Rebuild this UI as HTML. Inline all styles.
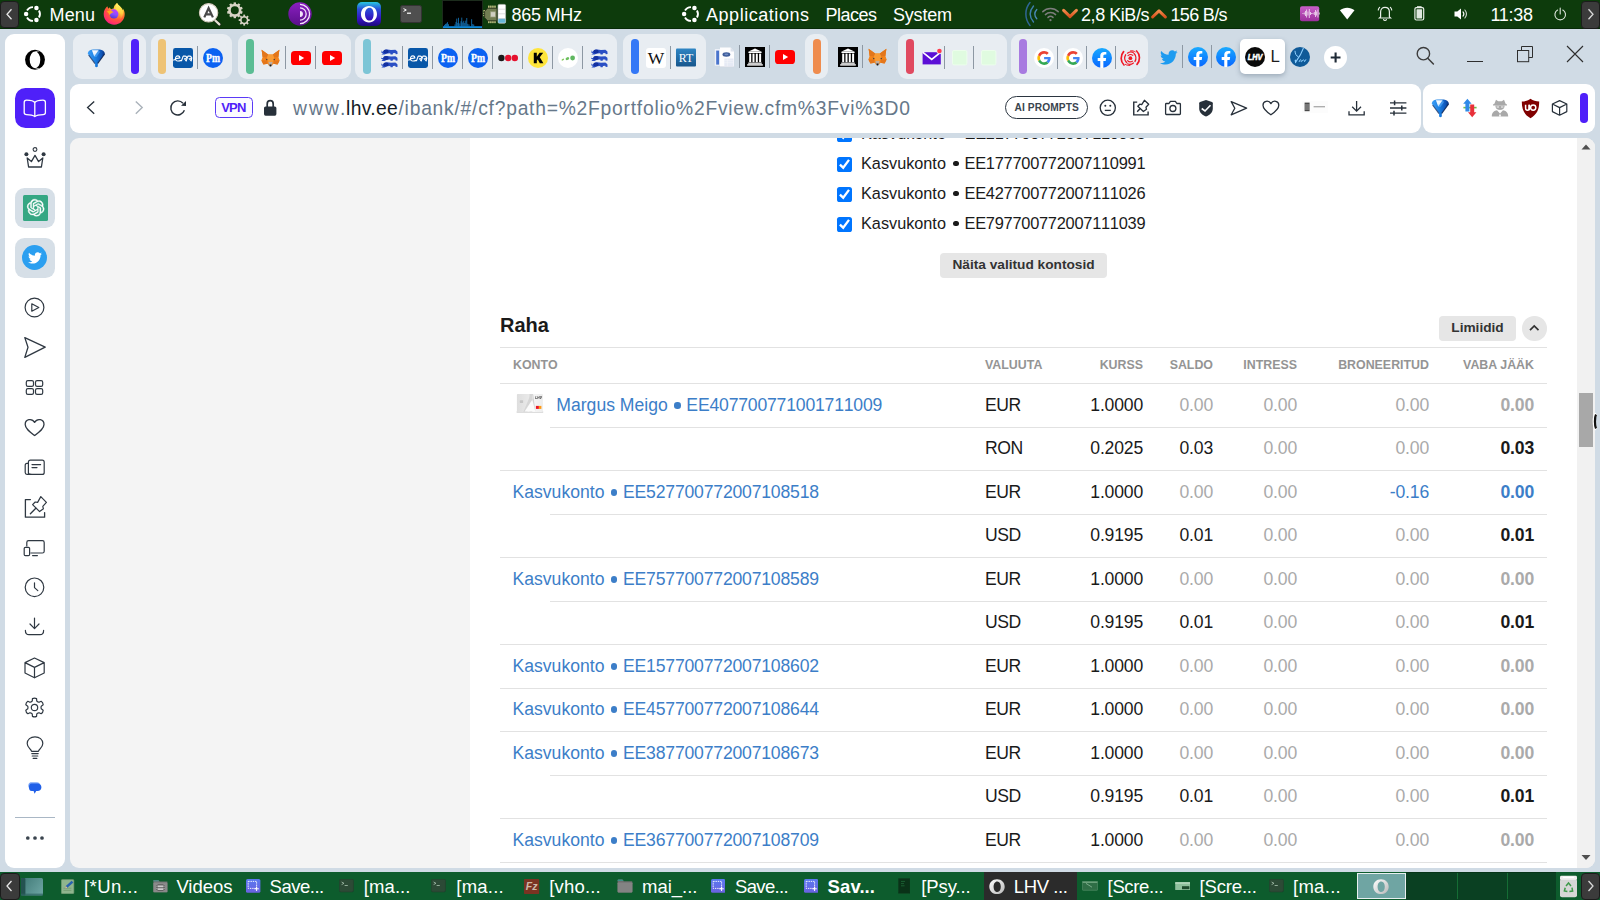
<!DOCTYPE html>
<html>
<head>
<meta charset="utf-8">
<title>LHV</title>
<style>
*{box-sizing:border-box;margin:0;padding:0}
html,body{width:1600px;height:900px;overflow:hidden;background:#d0dbe5;font-family:"Liberation Sans",sans-serif;}
.abs{position:absolute}
#top{position:absolute;left:0;top:0;width:1600px;height:28.6px;background:#0d3b0c;border-bottom:1px solid #062b07;color:#fff;font-size:18px;}
#bot{position:absolute;left:0;top:872px;width:1600px;height:28px;background:#0d5c2d;color:#fff;font-size:18px;}
.pt{position:absolute;top:4.8px;white-space:pre;line-height:21px;font-size:18px;color:#fff}
.bt{position:absolute;top:3px;white-space:pre;line-height:21px;font-size:18px;color:#fff}
#side{position:absolute;left:5px;top:34px;width:60px;height:834px;background:#fff;border-radius:9px}
#addr{position:absolute;left:70px;top:84px;width:1351px;height:49px;background:#fff;border-radius:9px}
#ext{position:absolute;left:1423px;top:84px;width:172px;height:49px;background:#fff;border-radius:9px}
#page{position:absolute;left:70px;top:138px;width:1525px;height:730px;background:#f4f4f4;border-radius:9px;overflow:hidden}
#white{position:absolute;left:400px;top:0;width:1107px;height:730px;background:#fff}
#sbar{position:absolute;left:1507px;top:0;width:18px;height:730px;background:#f1f1f1}
.grp{position:absolute;top:34px;height:45px;background:#e8edf2;border-radius:9px}
.gbar{position:absolute;top:5px;width:7px;height:35px;border-radius:4px}
.tsep{position:absolute;top:10px;width:1px;height:24px;background:#8e99a3}
.fav{position:absolute;top:47px;width:20px;height:20px}
.ln{position:absolute;height:1px;background:#e2e2e2}
.th{position:absolute;font-size:12.4px;font-weight:bold;color:#949494;line-height:14px;white-space:pre}
.td{position:absolute;font-size:17.6px;line-height:20px;white-space:pre;color:#1a1a1a}
.r{text-align:right}
.g{color:#aaa}
.b{font-weight:bold}
.lk{color:#3c7ec8}
.cb{position:absolute;left:837px;width:15px;height:15px;background:#0075ff;border-radius:2.6px}
.cl{position:absolute;left:861px;font-size:16.25px;line-height:20px;color:#1a1a1a;white-space:pre}
.bu{display:inline-block;width:6.4px;height:6.4px;border-radius:50%;background:currentColor;margin:0 5.6px 0 6.6px;vertical-align:2.6px}
.nm{letter-spacing:-0.19px;font-kerning:none}
.cl .nm{letter-spacing:-0.26px;font-size:16.4px}
.cl .bu{width:5.8px;height:5.8px;margin:0 6px 0 6.8px;vertical-align:2.6px}
.si{position:absolute;left:13px;width:24px;height:24px}
</style>
</head>
<body>
<div id="top"><div class="abs" style="left:0;top:1px;width:19px;height:27px;background:#3b3b3b;border-radius:4px;border:1px solid #1c1c1c"></div>
<svg class="abs" style="left:0;top:0" width="20" height="29"><path d="M11.5 9.2 L7 14.2 L11.5 19.2" fill="none" stroke="#e8e8e8" stroke-width="1.3"/></svg>
<svg class="abs" style="left:23.200000000000003px;top:4.1px" width="20" height="20" viewBox="-10 -10 20 20"><path d="M5.98 -3.45 A6.9 6.9 0 0 1 5.98 3.45" fill="none" stroke="#fff" stroke-width="1.9"/><path d="M0.00 6.90 A6.9 6.9 0 0 1 -5.98 3.45" fill="none" stroke="#fff" stroke-width="1.9"/><path d="M-5.98 -3.45 A6.9 6.9 0 0 1 -0.00 -6.90" fill="none" stroke="#fff" stroke-width="1.9"/><circle cx="3.45" cy="-5.98" r="2.25" fill="#fff"/><circle cx="3.45" cy="5.98" r="2.25" fill="#fff"/><circle cx="-6.90" cy="0.00" r="2.25" fill="#fff"/></svg>
<div class="pt" style="left:49.5px;font-size:18px;letter-spacing:0.156px;">Menu</div>
<svg class="abs" style="left:103px;top:2px" width="24" height="24" viewBox="0 0 24 24"><defs><radialGradient id="ffg" cx="0.72" cy="0.18" r="0.95"><stop offset="0" stop-color="#fff36b"/><stop offset="0.3" stop-color="#ffbd35"/><stop offset="0.6" stop-color="#ff5a36"/><stop offset="0.85" stop-color="#ff2f6a"/><stop offset="1" stop-color="#ea0f94"/></radialGradient><linearGradient id="ffp" x1="0.6" y1="0" x2="0.3" y2="1"><stop offset="0" stop-color="#c03cff"/><stop offset="0.5" stop-color="#8a4dff"/><stop offset="1" stop-color="#4a3ad0"/></linearGradient><linearGradient id="ffy" x1="0" y1="0" x2="0" y2="1"><stop offset="0" stop-color="#fff566"/><stop offset="0.6" stop-color="#ffd23f"/><stop offset="1" stop-color="#ff9a36" stop-opacity="0.2"/></linearGradient></defs>
<path d="M4.3 4.3 C2.4 6.4 0.7 8.6 0.7 12 C0.7 18 5.4 22.7 11.2 22.7 C17.2 22.7 21.8 18 21.7 12 C21.7 9.6 20.8 7.8 19.7 6.3 C19.9 7 19.9 7.6 19.6 8.2 C18.6 5 15.2 3.6 14 1 C12 2.6 10.6 4.4 10.7 6.4 C9.6 6.4 8.8 6.8 8.3 7.3 C7.6 6.8 7 6 6.7 5.2 C6.2 5.6 5.9 6.2 5.7 6.8 C5 6.2 4.5 5.2 4.3 4.3Z" fill="url(#ffg)"/>
<path d="M14 1 C15.2 3.6 18.6 5 19.6 8.2 C20.6 11.4 19.8 15.4 16.6 17.6 C18 14.8 17.6 10.6 15.4 8.2 C13.2 6.6 12 3.6 14 1Z" fill="url(#ffy)"/>
<circle cx="11" cy="12.1" r="4.5" fill="url(#ffp)"/>
<path d="M3.6 9.4 C6 8.2 9.4 8.6 10.9 10.3 C9.2 10.6 7.4 11.4 6.6 13.4 C6.4 11.6 5.2 10.2 3.6 9.4Z" fill="#ffa51f"/>
<path d="M8.3 7.3 C10 7 12.6 7.2 13.8 8.6 C12.6 8.2 11.6 8.4 11 8.8Z" fill="#b23cf0" opacity="0.8"/></svg>
<svg class="abs" style="left:196px;top:1px" width="27" height="27" viewBox="0 0 27 27"><path d="M19.4 19.6 L23.4 23.4" stroke="#1a1a1a" stroke-width="3.6" stroke-linecap="round" opacity="0.55"/><path d="M19 19.2 L23.4 23.4" stroke="#e4e0d2" stroke-width="2.2" stroke-linecap="round"/><circle cx="12.6" cy="11.8" r="10" fill="#1a1a1a" opacity="0.5"/><circle cx="12.6" cy="11.8" r="9.2" fill="#fff" stroke="#d4cfbd" stroke-width="1.1"/><path d="M8.3 16.4 L12.6 7.2 L16.9 16.4 M10 13.4 L15.2 13.4" fill="none" stroke="#4a4a4a" stroke-width="2.2"/></svg>
<svg class="abs" style="left:225px;top:0px" width="28" height="29"><g transform="translate(9.8,10.3)"><rect x="-1.2" y="-7.8999999999999995" width="2.4" height="2.6" transform="rotate(0.0)" fill="#d7d3c5"/><rect x="-1.2" y="-7.8999999999999995" width="2.4" height="2.6" transform="rotate(36.0)" fill="#d7d3c5"/><rect x="-1.2" y="-7.8999999999999995" width="2.4" height="2.6" transform="rotate(72.0)" fill="#d7d3c5"/><rect x="-1.2" y="-7.8999999999999995" width="2.4" height="2.6" transform="rotate(108.0)" fill="#d7d3c5"/><rect x="-1.2" y="-7.8999999999999995" width="2.4" height="2.6" transform="rotate(144.0)" fill="#d7d3c5"/><rect x="-1.2" y="-7.8999999999999995" width="2.4" height="2.6" transform="rotate(180.0)" fill="#d7d3c5"/><rect x="-1.2" y="-7.8999999999999995" width="2.4" height="2.6" transform="rotate(216.0)" fill="#d7d3c5"/><rect x="-1.2" y="-7.8999999999999995" width="2.4" height="2.6" transform="rotate(252.0)" fill="#d7d3c5"/><rect x="-1.2" y="-7.8999999999999995" width="2.4" height="2.6" transform="rotate(288.0)" fill="#d7d3c5"/><rect x="-1.2" y="-7.8999999999999995" width="2.4" height="2.6" transform="rotate(324.0)" fill="#d7d3c5"/><circle r="5.3" fill="none" stroke="#d7d3c5" stroke-width="2.5999999999999996"/></g><g transform="translate(19.2,20.1)"><rect x="-0.9" y="-5.5" width="1.8" height="2.6" transform="rotate(0.0)" fill="#d7d3c5"/><rect x="-0.9" y="-5.5" width="1.8" height="2.6" transform="rotate(45.0)" fill="#d7d3c5"/><rect x="-0.9" y="-5.5" width="1.8" height="2.6" transform="rotate(90.0)" fill="#d7d3c5"/><rect x="-0.9" y="-5.5" width="1.8" height="2.6" transform="rotate(135.0)" fill="#d7d3c5"/><rect x="-0.9" y="-5.5" width="1.8" height="2.6" transform="rotate(180.0)" fill="#d7d3c5"/><rect x="-0.9" y="-5.5" width="1.8" height="2.6" transform="rotate(225.0)" fill="#d7d3c5"/><rect x="-0.9" y="-5.5" width="1.8" height="2.6" transform="rotate(270.0)" fill="#d7d3c5"/><rect x="-0.9" y="-5.5" width="1.8" height="2.6" transform="rotate(315.0)" fill="#d7d3c5"/><circle r="3.4000000000000004" fill="none" stroke="#d7d3c5" stroke-width="1.6"/></g></svg>
<svg class="abs" style="left:288px;top:2px" width="24" height="24" viewBox="0 0 24 24"><defs><linearGradient id="tg" x1="0" y1="0" x2="0" y2="1"><stop offset="0" stop-color="#8a1fc0"/><stop offset="1" stop-color="#5a0f8a"/></linearGradient><clipPath id="tc"><rect x="12" y="0" width="12" height="24"/></clipPath></defs><circle cx="12" cy="12" r="11.7" fill="url(#tg)"/><g clip-path="url(#tc)" fill="none" stroke="#f3e6fa" stroke-width="1.3"><circle cx="12" cy="12" r="9.6"/><circle cx="12" cy="12" r="6.2"/><circle cx="12" cy="12" r="2.3" fill="#f3e6fa"/></g></svg>
<svg class="abs" style="left:357px;top:2px" width="24" height="24" viewBox="0 0 24 24"><defs><linearGradient id="og" x1="0" y1="0" x2="0" y2="1"><stop offset="0" stop-color="#27c8e0"/><stop offset="0.3" stop-color="#2a4fd8"/><stop offset="0.7" stop-color="#3512c0"/><stop offset="1" stop-color="#1c0a7a"/></linearGradient></defs><rect x="0" y="0" width="24" height="24" rx="5" fill="url(#og)"/><path fill-rule="evenodd" d="M12 4 C16.8 4 20 7.6 20 12.2 C20 16.8 16.8 20.4 12 20.4 C7.2 20.4 4 16.8 4 12.2 C4 7.6 7.2 4 12 4Z M12.6 5.8 C10 5.8 8 8.4 8 12.2 C8 16 10 18.6 12.6 18.6 C15.2 18.6 16.6 16 16.6 12.2 C16.6 8.4 15.2 5.8 12.6 5.8Z" fill="#fff"/></svg>
<div class="abs" style="left:400px;top:5px;width:22px;height:18px;background:#4f4f4f;border:1px solid #333;border-radius:2.5px"></div>
<svg class="abs" style="left:400px;top:5px" width="22" height="18"><path d="M3.5 3.6 L6.3 5 L3.5 6.4" fill="none" stroke="#fff" stroke-width="1"/><rect x="7" y="7.6" width="4" height="1.2" fill="#fff"/></svg>
<svg class="abs" style="left:442px;top:0" width="41" height="29"><rect x="0" y="0" width="41" height="29" fill="#1c2c1c"/><rect x="1" y="1" width="39" height="27" fill="#000"/><rect x="1" y="26.2" width="39" height="1.8" fill="#0b86d6"/><rect x="2.0" y="24.9" width="0.8" height="1.5" fill="#1a8fe0" opacity="0.85"/><rect x="3.0" y="23.9" width="0.8" height="2.5" fill="#1a8fe0" opacity="0.85"/><rect x="4.0" y="23.4" width="0.8" height="3" fill="#1a8fe0" opacity="0.85"/><rect x="5.0" y="22.2" width="0.8" height="4.2" fill="#1a8fe0" opacity="0.85"/><rect x="6.0" y="24.2" width="0.8" height="2.2" fill="#1a8fe0" opacity="0.85"/><rect x="12.6" y="24.4" width="0.8" height="2" fill="#1a8fe0" opacity="0.85"/><rect x="13.6" y="21.9" width="0.8" height="4.5" fill="#1a8fe0" opacity="0.85"/><rect x="14.4" y="18.6" width="0.8" height="7.8" fill="#1a8fe0" opacity="0.85"/><rect x="15.4" y="22.9" width="0.8" height="3.5" fill="#1a8fe0" opacity="0.85"/><rect x="16.2" y="17.8" width="0.8" height="8.6" fill="#1a8fe0" opacity="0.85"/><rect x="17.4" y="23.4" width="0.8" height="3" fill="#1a8fe0" opacity="0.85"/><rect x="18.6" y="21.2" width="0.8" height="5.2" fill="#1a8fe0" opacity="0.85"/><rect x="19.4" y="17.6" width="0.8" height="8.8" fill="#1a8fe0" opacity="0.85"/><rect x="20.4" y="22.4" width="0.8" height="4" fill="#1a8fe0" opacity="0.85"/><rect x="21.4" y="20.8" width="0.8" height="5.6" fill="#1a8fe0" opacity="0.85"/><rect x="22.4" y="23.0" width="0.8" height="3.4" fill="#1a8fe0" opacity="0.85"/><rect x="23.4" y="20.6" width="0.8" height="5.8" fill="#1a8fe0" opacity="0.85"/><rect x="24.4" y="18.0" width="0.8" height="8.4" fill="#1a8fe0" opacity="0.85"/><rect x="25.4" y="23.8" width="0.8" height="2.6" fill="#1a8fe0" opacity="0.85"/><rect x="26.6" y="24.4" width="0.8" height="2" fill="#1a8fe0" opacity="0.85"/><rect x="29.3" y="19.2" width="0.8" height="7.2" fill="#1a8fe0" opacity="0.85"/><rect x="30.4" y="24.0" width="0.8" height="2.4" fill="#1a8fe0" opacity="0.85"/><rect x="31.4" y="24.6" width="0.8" height="1.8" fill="#1a8fe0" opacity="0.85"/></svg>
<svg class="abs" style="left:483px;top:0" width="24" height="29"><rect x="5.20" y="5.4" width="1.3" height="3" rx="0.4" fill="#e6dc9c"/><rect x="5.20" y="20.6" width="1.3" height="2.6" rx="0.4" fill="#e6dc9c"/><rect x="7.25" y="5.4" width="1.3" height="3" rx="0.4" fill="#e6dc9c"/><rect x="7.25" y="20.6" width="1.3" height="2.6" rx="0.4" fill="#e6dc9c"/><rect x="9.30" y="5.4" width="1.3" height="3" rx="0.4" fill="#e6dc9c"/><rect x="9.30" y="20.6" width="1.3" height="2.6" rx="0.4" fill="#e6dc9c"/><rect x="11.35" y="5.4" width="1.3" height="3" rx="0.4" fill="#e6dc9c"/><rect x="11.35" y="20.6" width="1.3" height="2.6" rx="0.4" fill="#e6dc9c"/><rect x="0.3" y="10.2" width="2.4" height="1.4" rx="0.4" fill="#e6dc9c"/><rect x="0.3" y="12.5" width="2.4" height="1.4" rx="0.4" fill="#e6dc9c"/><rect x="0.3" y="14.8" width="2.4" height="1.4" rx="0.4" fill="#e6dc9c"/><path d="M1.6 11.4 L4.6 8.2 L14 8.2 L14 20.8 L4.6 20.8 L1.6 17.6Z" fill="#717d52" stroke="#2c331e" stroke-width="0.9"/><rect x="7.6" y="11.8" width="4.8" height="5.2" fill="#cfcfc2" stroke="#979f7c" stroke-width="0.7"/><rect x="15" y="4.4" width="7.6" height="18.8" rx="1.2" fill="#fff" stroke="#c4c4c4" stroke-width="0.6"/><rect x="15.3" y="18.6" width="7" height="4.2" fill="#68b6d6"/><path d="M15.3 9.2 H22.3 M15.3 13.8 H22.3 M15.3 18.5 H22.3" stroke="#c8c8c8" stroke-width="0.6"/></svg>
<div class="pt" style="left:511.5px;font-size:18px;letter-spacing:-0.255px;">865 MHz</div>
<svg class="abs" style="left:680.5px;top:4.1px" width="20" height="20" viewBox="-10 -10 20 20"><path d="M5.98 -3.45 A6.9 6.9 0 0 1 5.98 3.45" fill="none" stroke="#fff" stroke-width="1.9"/><path d="M0.00 6.90 A6.9 6.9 0 0 1 -5.98 3.45" fill="none" stroke="#fff" stroke-width="1.9"/><path d="M-5.98 -3.45 A6.9 6.9 0 0 1 -0.00 -6.90" fill="none" stroke="#fff" stroke-width="1.9"/><circle cx="3.45" cy="-5.98" r="2.25" fill="#fff"/><circle cx="3.45" cy="5.98" r="2.25" fill="#fff"/><circle cx="-6.90" cy="0.00" r="2.25" fill="#fff"/></svg>
<div class="pt" style="left:706px;font-size:18px;letter-spacing:0.540px;">Applications</div>
<div class="pt" style="left:825.5px;font-size:18px;letter-spacing:-0.506px;">Places</div>
<div class="pt" style="left:893px;font-size:18px;letter-spacing:-0.203px;">System</div>
<svg class="abs" style="left:1023px;top:0" width="17" height="29" viewBox="0 0 17 29"><g fill="none" stroke-linecap="round"><path d="M7 2.5 C1.5 9 1.5 19 7 25.5" stroke="#2f6694" stroke-width="1.5"/><path d="M10.5 6 C6.3 11 6.3 17 10.5 22" stroke="#3f7fae" stroke-width="1.4"/><path d="M13.8 9.5 C11.2 12.5 11.2 15.8 13.8 18.8" stroke="#4a8ab8" stroke-width="1.3"/></g></svg>
<svg class="abs" style="left:1041px;top:5px" width="19" height="18" viewBox="0 0 19 18"><g fill="none" stroke="#7d7d7d" stroke-width="1.5" stroke-linecap="round"><path d="M1.8 6.6 C6 2.4 13 2.4 17.2 6.6"/><path d="M4.4 9.6 C7.2 6.9 11.8 6.9 14.6 9.6"/><path d="M7 12.4 C8.4 11.1 10.6 11.1 12 12.4"/></g><circle cx="9.5" cy="15.2" r="1.1" fill="#7d7d7d"/></svg>
<svg class="abs" style="left:1061px;top:7px" width="18" height="14"><defs><linearGradient id="ch" x1="0" y1="0" x2="0" y2="1"><stop offset="0" stop-color="#f08a4a"/><stop offset="1" stop-color="#d9531e"/></linearGradient></defs><path d="M2.6 3.4 L9 9.6 L15.4 3.4" fill="none" stroke="url(#ch)" stroke-width="3" stroke-linecap="round" stroke-linejoin="round"/></svg>
<div class="pt" style="left:1081px;font-size:18px;letter-spacing:-0.443px;">2,8 KiB/s</div>
<svg class="abs" style="left:1149.5px;top:7px" width="18" height="14"><path d="M2.6 10 L9 3.8 L15.4 10" fill="none" stroke="url(#ch)" stroke-width="3" stroke-linecap="round" stroke-linejoin="round"/></svg>
<div class="pt" style="left:1170.5px;font-size:18px;letter-spacing:-0.674px;">156 B/s</div>
<svg class="abs" style="left:1299.5px;top:6px" width="20" height="16"><defs><linearGradient id="pa" x1="0" y1="0" x2="0" y2="1"><stop offset="0" stop-color="#c860c8"/><stop offset="1" stop-color="#9b2f9b"/></linearGradient></defs><rect x="0" y="0.3" width="19.2" height="15" rx="2" fill="url(#pa)"/><rect x="2.60" y="7.0" width="0.7" height="1" fill="#fff"/><rect x="3.85" y="6.5" width="0.7" height="2" fill="#fff"/><rect x="5.10" y="5.0" width="0.7" height="5" fill="#fff"/><rect x="6.35" y="3.5" width="0.7" height="8" fill="#fff"/><rect x="7.60" y="5.5" width="0.7" height="4" fill="#fff"/><rect x="8.85" y="3.0" width="0.7" height="9" fill="#fff"/><rect x="10.10" y="6.0" width="0.7" height="3" fill="#fff"/><rect x="11.35" y="7.0" width="0.7" height="1" fill="#fff"/><rect x="12.60" y="7.0" width="0.7" height="1" fill="#fff"/><rect x="13.85" y="6.0" width="0.7" height="3" fill="#fff"/><rect x="15.10" y="4.0" width="0.7" height="7" fill="#fff"/><rect x="16.35" y="5.5" width="0.7" height="4" fill="#fff"/><rect x="17.60" y="3.5" width="0.7" height="8" fill="#fff"/><rect x="18.85" y="6.5" width="0.7" height="2" fill="#fff"/><rect x="20.10" y="7.0" width="0.7" height="1" fill="#fff"/></svg>
<svg class="abs" style="left:1339px;top:6px" width="17" height="15"><path d="M8.2 13.4 L0.9 4.3 C5 0.9 11.4 0.9 15.5 4.3Z" fill="#fff"/></svg>
<svg class="abs" style="left:1376px;top:4px" width="18" height="19" viewBox="0 0 18 19"><g fill="none" stroke="#e9efe9" stroke-width="1.2" stroke-linecap="round"><path d="M4.6 12.8 L4.6 8 C4.6 5 6.4 3.4 9 3.4 C11.6 3.4 13.4 5 13.4 8 L13.4 12.8 L14.6 14 L3.4 14 Z"/><path d="M7.6 15.6 C8 16.7 10 16.7 10.4 15.6"/><path d="M3.6 3.4 C2.8 4.2 2.4 5 2.3 6 M14.4 3.4 C15.2 4.2 15.6 5 15.7 6"/></g></svg>
<svg class="abs" style="left:1413px;top:5px" width="13" height="17"><rect x="4" y="1.2" width="4.6" height="1.6" fill="#e9efe9"/><rect x="1.9" y="2.6" width="8.8" height="12.4" rx="1.5" fill="none" stroke="#e9efe9" stroke-width="1.2"/><rect x="3.5" y="4.2" width="5.6" height="9.2" rx="0.5" fill="#dfe7df"/></svg>
<svg class="abs" style="left:1453px;top:6px" width="17" height="16" viewBox="0 0 17 16"><path d="M1.5 5.6 L4.3 5.6 L8 2.4 L8 13.6 L4.3 10.4 L1.5 10.4Z" fill="#fff"/><g fill="none" stroke="#fff" stroke-width="1.1" stroke-linecap="round"><path d="M10 5.8 C11 7 11 9 10 10.2" /><path d="M11.9 4 C13.8 6.4 13.8 9.6 11.9 12" stroke="#cfd8cf"/></g></svg>
<div class="pt" style="left:1490.5px;font-size:18px;letter-spacing:-0.305px;">11:38</div>
<svg class="abs" style="left:1552px;top:6px" width="16" height="16"><path d="M5.6 4 A5.3 5.3 0 1 0 10.8 4" fill="none" stroke="#dfe7df" stroke-width="1.1" stroke-linecap="round"/><path d="M8.2 2 L8.2 8" stroke="#dfe7df" stroke-width="1.1" stroke-linecap="round"/></svg>
<div class="abs" style="left:1580.5px;top:0.5px;width:19.5px;height:28px;background:#3b3b3b;border-radius:4px;border:1px solid #1c1c1c"></div>
<svg class="abs" style="left:1580px;top:0" width="20" height="29"><path d="M8.5 9.2 L13 14.2 L8.5 19.2" fill="none" stroke="#d8d8d8" stroke-width="1.3"/></svg></div>
<div id="tabs"><svg width="0" height="0" style="position:absolute"><defs>
<linearGradient id="fun" x1="0" y1="0" x2="1" y2="1"><stop offset="0" stop-color="#7fd0ff"/><stop offset="0.45" stop-color="#1b8be0"/><stop offset="1" stop-color="#0a3f8f"/></linearGradient>
<linearGradient id="fbg" x1="0" y1="0" x2="0" y2="1"><stop offset="0" stop-color="#19aaff"/><stop offset="1" stop-color="#0866ff"/></linearGradient>
<linearGradient id="rtg" x1="0" y1="0" x2="0" y2="1"><stop offset="0" stop-color="#2f86c4"/><stop offset="1" stop-color="#17568c"/></linearGradient>
</defs></svg>
<svg width="0" height="0" style="position:absolute"><defs><filter id="bl"><feGaussianBlur stdDeviation="0.55"/></filter></defs></svg>
<div class="grp" style="left:73px;width:45px"></div>
<svg class="abs" style="left:86px;top:48px" width="20" height="20" viewBox="0 0 20 20"><defs><linearGradient id="fga" x1="0" y1="0" x2="1" y2="0"><stop offset="0" stop-color="#3d9ef6"/><stop offset="0.45" stop-color="#1a7fe2"/><stop offset="0.8" stop-color="#0f55b8"/><stop offset="1" stop-color="#08307a"/></linearGradient><linearGradient id="fha" x1="0" y1="0" x2="0.3" y2="1"><stop offset="0" stop-color="#ffffff"/><stop offset="0.6" stop-color="#e6f3ff"/><stop offset="1" stop-color="#9fd0ff"/></linearGradient></defs><path d="M1.8 5 C2.6 2.6 5 1.6 7 1.6 H13.9 C16.4 1.8 18.6 3.6 18.9 5.4 L11.8 15.3 V18.4 Q10.3 19.9 9.1 18.4 V15.3 L1.8 5.7Z" fill="url(#fga)"/><path d="M2.6 7 L9 15.6" stroke="#06245c" stroke-width="1.1" opacity="0.75"/><path d="M18.6 6 L11.7 15.5" stroke="#041a48" stroke-width="1.2" opacity="0.85"/><path d="M5.9 2.2 H12.6 L8.3 8.7Z" fill="url(#fha)"/><path d="M8.3 8.7 L12.6 2.2 L14 4 L10.4 9Z" fill="#5cb0ff" opacity="0.55"/></svg>
<div class="grp" style="left:123px;width:22.5px"></div>
<div class="abs" style="left:131px;top:38.5px;width:7.5px;height:35.5px;border-radius:3.75px;background:#4f20f9"></div>
<div class="grp" style="left:150.5px;width:81.5px"></div>
<div class="abs" style="left:158.2px;top:38.5px;width:7.5px;height:35.5px;border-radius:3.75px;background:#eec375"></div>
<svg class="abs" style="left:173px;top:48px" width="20" height="20" viewBox="0 0 20 20"><rect width="20" height="20" rx="2.4" fill="#0857a8"/><g fill="none" stroke="#fff" stroke-width="1.1" stroke-linecap="round" stroke-linejoin="round"><path d="M0.5 12 C1.4 12.2 2 11.6 2.7 10.8 L6.9 9.9 C6.9 7.3 3.4 7.1 2.6 9.6 C1.9 12.2 3.6 13.3 5.4 13 C7 12.8 7.8 12.6 8.5 12.5"/><path d="M8.5 12.7 L10.2 8.1 H12.3 C14 8.1 14 10.2 12.6 10.5 L11.4 10.7 L13.2 12.8"/><path d="M13.2 12.7 L14.9 8.1 H17 C18.7 8.1 18.7 10.2 17.3 10.5 L16.1 10.7 L18.2 12.9 L18.8 9.8"/></g></svg>
<div class="abs" style="left:197.1px;top:46px;width:1px;height:23px;background:#8d98a3"></div>
<svg class="abs" style="left:203px;top:48px" width="20" height="20" viewBox="0 0 20 20"><circle cx="10" cy="10" r="10" fill="#0b62f2"/><text x="10.1" y="13.8" font-family="Liberation Serif" font-weight="bold" font-size="12.6" text-anchor="middle" fill="#fff" stroke="#fff" stroke-width="0.35" textLength="14" lengthAdjust="spacingAndGlyphs">Pm</text></svg>
<div class="grp" style="left:238px;width:112.5px"></div>
<div class="abs" style="left:246px;top:38.5px;width:7.5px;height:35.5px;border-radius:3.75px;background:#5bbd94"></div>
<svg class="abs" style="left:260px;top:48px" width="21" height="20" viewBox="0 0 21 20"><path d="M1.6 1.8 L8.2 6.4 L12.8 6.4 L19.4 1.8 L18.4 9 L19.6 12.4 L17.6 16.4 L13.4 15.8 L12 17.8 L9 17.8 L7.6 15.8 L3.4 16.4 L1.4 12.4 L2.6 9Z" fill="#f6851b"/>
<path d="M1.6 1.8 L8.2 6.4 L7 9.6 L2.6 9Z" fill="#e2761b"/><path d="M19.4 1.8 L12.8 6.4 L14 9.6 L18.4 9Z" fill="#e2761b"/>
<path d="M8.2 6.4 L12.8 6.4 L14 9.6 L12.6 14 L8.4 14 L7 9.6Z" fill="#f89c35"/>
<path d="M3.4 16.4 L7.6 15.8 L7 12.4 L1.4 12.4Z" fill="#e4761b"/><path d="M17.6 16.4 L13.4 15.8 L14 12.4 L19.6 12.4Z" fill="#e4761b"/>
<path d="M8.4 14 L12.6 14 L12 17.8 L9 17.8Z" fill="#c0ad9e"/><path d="M9.4 16.6 L11.6 16.6 L11.2 18.4 L9.8 18.4Z" fill="#161616"/>
<path d="M5.6 10.6 L7.6 11.4 L6.8 12.6Z" fill="#233447"/><path d="M15.4 10.6 L13.4 11.4 L14.2 12.6Z" fill="#233447"/></svg>
<div class="abs" style="left:284.8px;top:46px;width:1px;height:23px;background:#8d98a3"></div>
<svg class="abs" style="left:291px;top:48px" width="20" height="20" viewBox="0 0 20 20"><rect x="0" y="3" width="20" height="14" rx="3.6" fill="#ff0000"/><path d="M8 7 L13.2 10 L8 13Z" fill="#fff"/></svg>
<div class="abs" style="left:314.8px;top:46px;width:1px;height:23px;background:#8d98a3"></div>
<svg class="abs" style="left:321.5px;top:48px" width="20" height="20" viewBox="0 0 20 20"><rect x="0" y="3" width="20" height="14" rx="3.6" fill="#ff0000"/><path d="M8 7 L13.2 10 L8 13Z" fill="#fff"/></svg>
<div class="grp" style="left:355.3px;width:261.90000000000003px"></div>
<div class="abs" style="left:363px;top:38.5px;width:7.5px;height:35.5px;border-radius:3.75px;background:#7cc5d6"></div>
<svg class="abs" style="left:380px;top:48px" width="18" height="20" viewBox="0 0 18 20"><g filter="url(#bl)"><path d="M1.2 2.0 C0.4 3.0 1.4 4.0 3 3.6 L4 2.2 C6 0.9999999999999999 9 1.5999999999999999 11 2.0 L15.4 1.7999999999999998 L17.4 3.4 L17.6 6.0 L15.8 6.300000000000001 L15.2 5.0 L13 5.199999999999999 L12.6 6.4 L10.6 6.4 L10.2 5.199999999999999 L7 5.4 L4.6 6.6 L1.4 6.6 L3 5.199999999999999 L1.2 4.4Z" fill="#2a4fc4"/><ellipse cx="6" cy="3.6" rx="2.6" ry="2" fill="#1230a0"/><path d="M1.2 8.4 C0.4 9.4 1.4 10.4 3 10.0 L4 8.600000000000001 C6 7.4 9 8.0 11 8.4 L15.4 8.200000000000001 L17.4 9.8 L17.6 12.4 L15.8 12.700000000000001 L15.2 11.4 L13 11.600000000000001 L12.6 12.8 L10.6 12.8 L10.2 11.600000000000001 L7 11.8 L4.6 13.0 L1.4 13.0 L3 11.600000000000001 L1.2 10.8Z" fill="#2a4fc4"/><ellipse cx="6" cy="10.0" rx="2.6" ry="2" fill="#1230a0"/><path d="M1.2 14.8 C0.4 15.8 1.4 16.8 3 16.400000000000002 L4 15.000000000000002 C6 13.8 9 14.4 11 14.8 L15.4 14.600000000000001 L17.4 16.200000000000003 L17.6 18.8 L15.8 19.1 L15.2 17.8 L13 18.0 L12.6 19.200000000000003 L10.6 19.200000000000003 L10.2 18.0 L7 18.200000000000003 L4.6 19.400000000000002 L1.4 19.400000000000002 L3 18.0 L1.2 17.200000000000003Z" fill="#2a4fc4"/><ellipse cx="6" cy="16.400000000000002" rx="2.6" ry="2" fill="#1230a0"/></g></svg>
<div class="abs" style="left:402.0px;top:46px;width:1px;height:23px;background:#8d98a3"></div>
<svg class="abs" style="left:407.8px;top:48px" width="20" height="20" viewBox="0 0 20 20"><rect width="20" height="20" rx="2.4" fill="#0857a8"/><g fill="none" stroke="#fff" stroke-width="1.1" stroke-linecap="round" stroke-linejoin="round"><path d="M0.5 12 C1.4 12.2 2 11.6 2.7 10.8 L6.9 9.9 C6.9 7.3 3.4 7.1 2.6 9.6 C1.9 12.2 3.6 13.3 5.4 13 C7 12.8 7.8 12.6 8.5 12.5"/><path d="M8.5 12.7 L10.2 8.1 H12.3 C14 8.1 14 10.2 12.6 10.5 L11.4 10.7 L13.2 12.8"/><path d="M13.2 12.7 L14.9 8.1 H17 C18.7 8.1 18.7 10.2 17.3 10.5 L16.1 10.7 L18.2 12.9 L18.8 9.8"/></g></svg>
<div class="abs" style="left:432.0px;top:46px;width:1px;height:23px;background:#8d98a3"></div>
<svg class="abs" style="left:437.8px;top:48px" width="20" height="20" viewBox="0 0 20 20"><circle cx="10" cy="10" r="10" fill="#0b62f2"/><text x="10.1" y="13.8" font-family="Liberation Serif" font-weight="bold" font-size="12.6" text-anchor="middle" fill="#fff" stroke="#fff" stroke-width="0.35" textLength="14" lengthAdjust="spacingAndGlyphs">Pm</text></svg>
<div class="abs" style="left:462.1px;top:46px;width:1px;height:23px;background:#8d98a3"></div>
<svg class="abs" style="left:467.8px;top:48px" width="20" height="20" viewBox="0 0 20 20"><circle cx="10" cy="10" r="10" fill="#0b62f2"/><text x="10.1" y="13.8" font-family="Liberation Serif" font-weight="bold" font-size="12.6" text-anchor="middle" fill="#fff" stroke="#fff" stroke-width="0.35" textLength="14" lengthAdjust="spacingAndGlyphs">Pm</text></svg>
<div class="abs" style="left:492.0px;top:46px;width:1px;height:23px;background:#8d98a3"></div>
<svg class="abs" style="left:498px;top:48px" width="20" height="20" viewBox="0 0 20 20"><circle cx="3.4" cy="10" r="3.2" fill="#1a1a1a"/><circle cx="10.2" cy="10" r="3.2" fill="#e5102e"/><circle cx="16.8" cy="10" r="3.2" fill="#e5102e"/></svg>
<div class="abs" style="left:522.0px;top:46px;width:1px;height:23px;background:#8d98a3"></div>
<svg class="abs" style="left:527.8px;top:48px" width="20" height="20" viewBox="0 0 20 20"><circle cx="10" cy="10" r="10" fill="#ffe53b"/><path d="M5.8 4.8 L8.8 4.8 L8.8 8.8 L11.6 4.8 L15.2 4.8 L11.8 9.2 L15.4 15.2 L11.8 15.2 L9.8 11.4 L8.8 12.6 L8.8 15.2 L5.8 15.2Z" fill="#000"/></svg>
<div class="abs" style="left:552.1px;top:46px;width:1px;height:23px;background:#8d98a3"></div>
<svg class="abs" style="left:558.1px;top:48px" width="20" height="20" viewBox="0 0 20 20"><circle cx="10" cy="10" r="10" fill="#fff"/><circle cx="14.6" cy="10" r="2.4" fill="#5fb760"/><ellipse cx="9.4" cy="10.6" rx="1.9" ry="1.4" transform="rotate(-30 9.4 10.6)" fill="#6dbf5f"/><ellipse cx="4.8" cy="11.6" rx="1.4" ry="0.8" transform="rotate(-30 4.8 11.6)" fill="#86c95f"/></svg>
<div class="abs" style="left:582.1px;top:46px;width:1px;height:23px;background:#8d98a3"></div>
<svg class="abs" style="left:590.4px;top:48px" width="18" height="20" viewBox="0 0 18 20"><g filter="url(#bl)"><path d="M1.2 2.0 C0.4 3.0 1.4 4.0 3 3.6 L4 2.2 C6 0.9999999999999999 9 1.5999999999999999 11 2.0 L15.4 1.7999999999999998 L17.4 3.4 L17.6 6.0 L15.8 6.300000000000001 L15.2 5.0 L13 5.199999999999999 L12.6 6.4 L10.6 6.4 L10.2 5.199999999999999 L7 5.4 L4.6 6.6 L1.4 6.6 L3 5.199999999999999 L1.2 4.4Z" fill="#2a4fc4"/><ellipse cx="6" cy="3.6" rx="2.6" ry="2" fill="#1230a0"/><path d="M1.2 8.4 C0.4 9.4 1.4 10.4 3 10.0 L4 8.600000000000001 C6 7.4 9 8.0 11 8.4 L15.4 8.200000000000001 L17.4 9.8 L17.6 12.4 L15.8 12.700000000000001 L15.2 11.4 L13 11.600000000000001 L12.6 12.8 L10.6 12.8 L10.2 11.600000000000001 L7 11.8 L4.6 13.0 L1.4 13.0 L3 11.600000000000001 L1.2 10.8Z" fill="#2a4fc4"/><ellipse cx="6" cy="10.0" rx="2.6" ry="2" fill="#1230a0"/><path d="M1.2 14.8 C0.4 15.8 1.4 16.8 3 16.400000000000002 L4 15.000000000000002 C6 13.8 9 14.4 11 14.8 L15.4 14.600000000000001 L17.4 16.200000000000003 L17.6 18.8 L15.8 19.1 L15.2 17.8 L13 18.0 L12.6 19.200000000000003 L10.6 19.200000000000003 L10.2 18.0 L7 18.200000000000003 L4.6 19.400000000000002 L1.4 19.400000000000002 L3 18.0 L1.2 17.200000000000003Z" fill="#2a4fc4"/><ellipse cx="6" cy="16.400000000000002" rx="2.6" ry="2" fill="#1230a0"/></g></svg>
<div class="grp" style="left:622.9px;width:82.70000000000005px"></div>
<div class="abs" style="left:631px;top:38.5px;width:7.5px;height:35.5px;border-radius:3.75px;background:#3478f6"></div>
<svg class="abs" style="left:646px;top:48px" width="20" height="20" viewBox="0 0 20 20"><rect width="20" height="20" rx="3" fill="#fff"/><text x="10" y="15.6" font-family="Liberation Serif" font-size="16" text-anchor="middle" fill="#111" textLength="16.5" lengthAdjust="spacingAndGlyphs">W</text></svg>
<div class="abs" style="left:669.8px;top:46px;width:1px;height:23px;background:#8d98a3"></div>
<svg class="abs" style="left:676px;top:48px" width="20" height="20" viewBox="0 0 20 20"><rect y="0.5" width="20" height="18" rx="1" fill="url(#rtg)"/><text x="10" y="13.8" font-family="Liberation Serif" font-size="11.5" text-anchor="middle" fill="#fff" textLength="14.5" lengthAdjust="spacingAndGlyphs">RT</text></svg>
<svg class="abs" style="left:714.4px;top:46.5px" width="21" height="21" viewBox="0 0 21 21"><rect x="0.8" y="2.1" width="8.6" height="16.7" rx="0.6" fill="#eef1f8"/><rect x="2.2" y="3.6" width="2.9" height="14" fill="#4a74cc"/><path d="M6 0.5 H16.6 L20 4.4 V19.8 H6Z" fill="#fdfdfe"/><path d="M6 19.8 H20" stroke="#d4d8e2" stroke-width="0.7"/><path d="M16.6 0.5 V4.4 H20Z" fill="#dde2ec"/><ellipse cx="12.4" cy="7.5" rx="3.9" ry="2.2" fill="#3d5c9a"/><ellipse cx="12.4" cy="7.3" rx="2" ry="0.9" fill="#6f8cc4"/><rect x="10.3" y="11.5" width="9.2" height="7.8" fill="#e6eaf5"/><path d="M10.3 13.6 H19.5 M10.3 15.6 H19.5 M13.4 11.5 V19.3" stroke="#f4f6fb" stroke-width="0.5"/></svg>
<div class="abs" style="left:738.9px;top:45px;width:1px;height:23px;background:#8d98a3"></div>
<svg class="abs" style="left:745px;top:47px" width="20" height="20" viewBox="0 0 20 20"><rect width="20" height="20" fill="#000"/><path d="M10 1.6 L17 4.8 L3 4.8Z" fill="#fff"/><rect x="3.4" y="5" width="13.2" height="1" fill="#fff"/><rect x="4.2" y="6.6" width="2" height="8.6" fill="#fff"/><rect x="7.5" y="6.6" width="2" height="8.6" fill="#fff"/><rect x="10.8" y="6.6" width="2" height="8.6" fill="#fff"/><rect x="14.1" y="6.6" width="2" height="8.6" fill="#fff"/><rect x="3.2" y="15.6" width="13.6" height="1.2" fill="#fff"/><rect x="2.2" y="17.2" width="15.6" height="1.4" fill="#fff"/></svg>
<div class="abs" style="left:768.9px;top:45px;width:1px;height:23px;background:#8d98a3"></div>
<svg class="abs" style="left:775px;top:47px" width="20" height="20" viewBox="0 0 20 20"><rect x="0" y="3" width="20" height="14" rx="3.6" fill="#ff0000"/><path d="M8 7 L13.2 10 L8 13Z" fill="#fff"/></svg>
<div class="grp" style="left:805px;width:22.5px"></div>
<div class="abs" style="left:813px;top:38.5px;width:7.5px;height:35.5px;border-radius:3.75px;background:#ef8c4e"></div>
<svg class="abs" style="left:838px;top:47px" width="20" height="20" viewBox="0 0 20 20"><rect width="20" height="20" fill="#000"/><path d="M10 1.6 L17 4.8 L3 4.8Z" fill="#fff"/><rect x="3.4" y="5" width="13.2" height="1" fill="#fff"/><rect x="4.2" y="6.6" width="2" height="8.6" fill="#fff"/><rect x="7.5" y="6.6" width="2" height="8.6" fill="#fff"/><rect x="10.8" y="6.6" width="2" height="8.6" fill="#fff"/><rect x="14.1" y="6.6" width="2" height="8.6" fill="#fff"/><rect x="3.2" y="15.6" width="13.6" height="1.2" fill="#fff"/><rect x="2.2" y="17.2" width="15.6" height="1.4" fill="#fff"/></svg>
<div class="abs" style="left:862.1px;top:45px;width:1px;height:23px;background:#8d98a3"></div>
<svg class="abs" style="left:867.3px;top:47px" width="21" height="20" viewBox="0 0 21 20"><path d="M1.6 1.8 L8.2 6.4 L12.8 6.4 L19.4 1.8 L18.4 9 L19.6 12.4 L17.6 16.4 L13.4 15.8 L12 17.8 L9 17.8 L7.6 15.8 L3.4 16.4 L1.4 12.4 L2.6 9Z" fill="#f6851b"/>
<path d="M1.6 1.8 L8.2 6.4 L7 9.6 L2.6 9Z" fill="#e2761b"/><path d="M19.4 1.8 L12.8 6.4 L14 9.6 L18.4 9Z" fill="#e2761b"/>
<path d="M8.2 6.4 L12.8 6.4 L14 9.6 L12.6 14 L8.4 14 L7 9.6Z" fill="#f89c35"/>
<path d="M3.4 16.4 L7.6 15.8 L7 12.4 L1.4 12.4Z" fill="#e4761b"/><path d="M17.6 16.4 L13.4 15.8 L14 12.4 L19.6 12.4Z" fill="#e4761b"/>
<path d="M8.4 14 L12.6 14 L12 17.8 L9 17.8Z" fill="#c0ad9e"/><path d="M9.4 16.6 L11.6 16.6 L11.2 18.4 L9.8 18.4Z" fill="#161616"/>
<path d="M5.6 10.6 L7.6 11.4 L6.8 12.6Z" fill="#233447"/><path d="M15.4 10.6 L13.4 11.4 L14.2 12.6Z" fill="#233447"/></svg>
<div class="grp" style="left:898px;width:108.79999999999995px"></div>
<div class="abs" style="left:906px;top:38.5px;width:7.5px;height:35.5px;border-radius:3.75px;background:#e04a60"></div>
<svg class="abs" style="left:922px;top:46.6px" width="21" height="20" viewBox="0 0 21 20"><path d="M0.6 5.2 L18.8 5.2 L18.8 17.4 L0.6 17.4Z" fill="#5b0fd6"/><path d="M0.6 5.2 L9.7 12.4 L18.8 5.2" fill="none" stroke="#fff" stroke-width="1.6"/><circle cx="17.4" cy="4" r="2.9" fill="#e8edf2"/><circle cx="17.4" cy="4" r="2.3" fill="#ff3b4e"/></svg>
<div class="abs" style="left:943.9px;top:46px;width:1px;height:23px;background:#8d98a3"></div>
<svg class="abs" style="left:952.2px;top:50.4px" width="16" height="16" viewBox="0 0 16 16"><rect x="0.5" y="0.5" width="14.4" height="14.4" rx="1.5" fill="#e0fbe0" stroke="#ecfdec" stroke-width="1"/></svg>
<div class="abs" style="left:973.0px;top:46px;width:1px;height:23px;background:#8d98a3"></div>
<svg class="abs" style="left:981.2px;top:50.4px" width="16" height="16" viewBox="0 0 16 16"><rect x="0.5" y="0.5" width="14.4" height="14.4" rx="1.5" fill="#e0fbe0" stroke="#ecfdec" stroke-width="1"/></svg>
<div class="grp" style="left:1011.3px;width:137.10000000000014px"></div>
<div class="abs" style="left:1019px;top:38.5px;width:7.5px;height:35.5px;border-radius:3.75px;background:#a87be0"></div>
<svg class="abs" style="left:1034px;top:48px" width="20" height="20" viewBox="0 0 20 20"><circle cx="10" cy="10" r="10" fill="#fff"/>
<path d="M16.6 10.15 C16.6 9.65 16.56 9.3 16.48 8.9 L10.1 8.9 L10.1 11.35 L13.8 11.35 C13.7 12.1 13.2 13.0 12.3 13.6 L14.4 15.25 C15.8 14 16.6 12.25 16.6 10.15Z" fill="#4285f4"/>
<path d="M10.1 16.9 C11.95 16.9 13.5 16.3 14.4 15.25 L12.3 13.6 C11.75 14 11 14.25 10.1 14.25 C8.3 14.25 6.8 13.05 6.25 11.4 L4.05 13.1 C5.15 15.35 7.45 16.9 10.1 16.9Z" fill="#34a853"/>
<path d="M6.25 11.4 C6.1 10.95 6.02 10.5 6.02 10 C6.02 9.5 6.1 9.05 6.25 8.6 L4.05 6.9 C3.6 7.85 3.3 8.9 3.3 10 C3.3 11.1 3.6 12.15 4.05 13.1Z" fill="#fbbc05"/>
<path d="M10.1 5.75 C11.4 5.75 12.3 6.3 12.8 6.8 L14.7 4.95 C13.5 3.85 11.95 3.1 10.1 3.1 C7.45 3.1 5.15 4.65 4.05 6.9 L6.25 8.6 C6.8 6.95 8.3 5.75 10.1 5.75Z" fill="#ea4335"/></svg>
<div class="abs" style="left:1057.0px;top:46px;width:1px;height:23px;background:#8d98a3"></div>
<svg class="abs" style="left:1062.8px;top:48px" width="20" height="20" viewBox="0 0 20 20"><circle cx="10" cy="10" r="10" fill="#fff"/>
<path d="M16.6 10.15 C16.6 9.65 16.56 9.3 16.48 8.9 L10.1 8.9 L10.1 11.35 L13.8 11.35 C13.7 12.1 13.2 13.0 12.3 13.6 L14.4 15.25 C15.8 14 16.6 12.25 16.6 10.15Z" fill="#4285f4"/>
<path d="M10.1 16.9 C11.95 16.9 13.5 16.3 14.4 15.25 L12.3 13.6 C11.75 14 11 14.25 10.1 14.25 C8.3 14.25 6.8 13.05 6.25 11.4 L4.05 13.1 C5.15 15.35 7.45 16.9 10.1 16.9Z" fill="#34a853"/>
<path d="M6.25 11.4 C6.1 10.95 6.02 10.5 6.02 10 C6.02 9.5 6.1 9.05 6.25 8.6 L4.05 6.9 C3.6 7.85 3.3 8.9 3.3 10 C3.3 11.1 3.6 12.15 4.05 13.1Z" fill="#fbbc05"/>
<path d="M10.1 5.75 C11.4 5.75 12.3 6.3 12.8 6.8 L14.7 4.95 C13.5 3.85 11.95 3.1 10.1 3.1 C7.45 3.1 5.15 4.65 4.05 6.9 L6.25 8.6 C6.8 6.95 8.3 5.75 10.1 5.75Z" fill="#ea4335"/></svg>
<div class="abs" style="left:1086.0px;top:46px;width:1px;height:23px;background:#8d98a3"></div>
<svg class="abs" style="left:1092px;top:48px" width="20" height="20" viewBox="0 0 20 20"><circle cx="10" cy="10" r="10" fill="url(#fbg)"/><path d="M13.7 12.9 L14.15 10 L11.35 10 L11.35 8.1 C11.35 7.3 11.75 6.55 13 6.55 L14.3 6.55 L14.3 4.1 C14.3 4.1 13.15 3.9 12.05 3.9 C9.75 3.9 8.25 5.3 8.25 7.8 L8.25 10 L5.7 10 L5.7 12.9 L8.25 12.9 L8.25 19.9 C9.3 20.05 10.3 20.05 11.35 19.9 L11.35 12.9Z" fill="#fff"/></svg>
<div class="abs" style="left:1115.1px;top:46px;width:1px;height:23px;background:#8d98a3"></div>
<svg class="abs" style="left:1119.7px;top:48px" width="21" height="20" viewBox="0 0 21 20"><g fill="none" stroke="#f01826" stroke-linecap="round"><path d="M3.6 3.6 C0.2 7.4 0.4 13.6 4 17" stroke-width="1.7"/><path d="M17 16.4 C20.4 12.6 20.2 6.4 16.6 3" stroke-width="1.7"/><path d="M5.6 6.8 C4.2 9.2 4.6 12.6 6.6 14.6" stroke-width="1.4"/><path d="M15 13.4 C16.4 11 16 7.6 14 5.6" stroke-width="1.4"/><path d="M7.4 5.2 C9.2 3.8 11.6 3.6 13.2 4.4" stroke-width="1.2"/><path d="M13.4 15 C11.6 16.4 9.2 16.6 7.6 15.8" stroke-width="1.2"/><path d="M10.6 2.8 C12.4 2.6 14 3 15.2 3.8" stroke-width="1"/><path d="M10 17.4 C8.2 17.6 6.6 17.2 5.4 16.4" stroke-width="1"/><path d="M7.6 12.6 C8.6 13.8 10.6 14.2 12.4 13.2" stroke-width="1.2"/><path d="M8 7.6 C9.4 6.4 11.6 6.4 12.8 7.4" stroke-width="1.1"/></g><circle cx="10.4" cy="10.2" r="1.9" fill="#f01826"/></svg>
<svg class="abs" style="left:1160px;top:50px" width="17.6" height="14.7" viewBox="0 0 18 15"><path d="M5.66 14.5 C12.45 14.5 16.17 8.87 16.17 3.99 C16.17 3.83 16.17 3.67 16.16 3.51 C16.88 2.99 17.5 2.34 18 1.6 C17.34 1.89 16.63 2.09 15.88 2.18 C16.64 1.72 17.23 1 17.5 0.14 C16.79 0.56 16 0.87 15.16 1.03 C14.48 0.32 13.53 -0.13 12.47 -0.13 C10.43 -0.13 8.78 1.52 8.78 3.56 C8.78 3.85 8.81 4.13 8.87 4.4 C5.8 4.25 3.08 2.78 1.26 0.54 C0.94 1.09 0.76 1.72 0.76 2.4 C0.76 3.68 1.41 4.81 2.4 5.47 C1.8 5.45 1.23 5.29 0.73 5.01 L0.73 5.06 C0.73 6.85 2 8.34 3.69 8.68 C3.38 8.76 3.05 8.81 2.72 8.81 C2.48 8.81 2.25 8.79 2.02 8.74 C2.49 10.21 3.86 11.28 5.47 11.31 C4.21 12.3 2.62 12.89 0.89 12.89 C0.59 12.89 0.3 12.87 0.01 12.84 C1.64 13.89 3.58 14.5 5.66 14.5Z" fill="#1d9bf0" transform="translate(0,0.4)"/></svg>
<div class="abs" style="left:1181.9px;top:45px;width:1px;height:23px;background:#8d98a3"></div>
<svg class="abs" style="left:1187.7px;top:46.7px" width="20" height="20" viewBox="0 0 20 20"><circle cx="10" cy="10" r="10" fill="url(#fbg)"/><path d="M13.7 12.9 L14.15 10 L11.35 10 L11.35 8.1 C11.35 7.3 11.75 6.55 13 6.55 L14.3 6.55 L14.3 4.1 C14.3 4.1 13.15 3.9 12.05 3.9 C9.75 3.9 8.25 5.3 8.25 7.8 L8.25 10 L5.7 10 L5.7 12.9 L8.25 12.9 L8.25 19.9 C9.3 20.05 10.3 20.05 11.35 19.9 L11.35 12.9Z" fill="#fff"/></svg>
<div class="abs" style="left:1210.8px;top:45px;width:1px;height:23px;background:#8d98a3"></div>
<svg class="abs" style="left:1216.2px;top:46.7px" width="20" height="20" viewBox="0 0 20 20"><circle cx="10" cy="10" r="10" fill="url(#fbg)"/><path d="M13.7 12.9 L14.15 10 L11.35 10 L11.35 8.1 C11.35 7.3 11.75 6.55 13 6.55 L14.3 6.55 L14.3 4.1 C14.3 4.1 13.15 3.9 12.05 3.9 C9.75 3.9 8.25 5.3 8.25 7.8 L8.25 10 L5.7 10 L5.7 12.9 L8.25 12.9 L8.25 19.9 C9.3 20.05 10.3 20.05 11.35 19.9 L11.35 12.9Z" fill="#fff"/></svg>
<div class="abs" style="left:1240px;top:39px;width:44.7px;height:34.5px;background:#fff;border-radius:5px;box-shadow:0 2px 5px rgba(60,80,100,0.35)"></div>
<svg class="abs" style="left:1244.8px;top:46.7px" width="20" height="20" viewBox="0 0 20 20"><circle cx="10" cy="10" r="10" fill="#0a0a0a"/><text x="10" y="13" font-family="Liberation Sans" font-weight="bold" font-style="italic" font-size="8.2" text-anchor="middle" fill="#fff" stroke="#fff" stroke-width="0.5" textLength="14.6" lengthAdjust="spacingAndGlyphs">LHV</text></svg>
<div class="abs" style="left:1270.4px;top:46.6px;font-size:16.8px;line-height:20px;color:#1c1c1c">L</div>
<svg class="abs" style="left:1290px;top:46.7px" width="20" height="20" viewBox="0 0 20 20"><circle cx="10" cy="10" r="10" fill="#0f5a98"/><g fill="none" stroke="#8fd0ff" stroke-linecap="round"><path d="M5 4.2 C5.2 7 6.2 9 8 9.6" stroke-width="1"/><path d="M13.4 1.2 C12 5.4 9.6 9.8 6 14.6 L5.2 12.8 L5.6 15.6" stroke-width="1.1"/><path d="M9.2 14.6 C9.4 12.4 11.2 12.2 11.2 13.4 C10.2 14.8 11.6 15 12.4 14 C12.6 12.6 13.6 12.4 14 13.2 L14.6 14.6 L15.8 12.6" stroke-width="0.9"/></g></svg>
<div class="abs" style="left:1324px;top:45.5px;width:23px;height:23px;border-radius:50%;background:#fff"></div>
<svg class="abs" style="left:1324px;top:45.5px" width="23" height="23" viewBox="0 0 23 23"><path d="M11.6 6.6 V16.4 M6.7 11.5 H16.5" stroke="#1f2a36" stroke-width="2.1"/></svg>
<svg class="abs" style="left:1412px;top:42px" width="26" height="26" viewBox="0 0 26 26"><circle cx="11.4" cy="11.7" r="6.2" fill="none" stroke="#3c3c3c" stroke-width="1.4"/><path d="M16 16.4 L21.4 22" stroke="#3c3c3c" stroke-width="1.5" stroke-linecap="round"/></svg>
<div class="abs" style="left:1467px;top:60.8px;width:16px;height:1px;background:#2e2e2e"></div>
<svg class="abs" style="left:1514px;top:43px" width="22" height="22" viewBox="0 0 22 22"><rect x="3.5" y="7.5" width="11.2" height="11.2" fill="none" stroke="#2e2e2e" stroke-width="1"/><path d="M7.5 7.5 V3.5 H18.5 V14.5 H14.7" fill="none" stroke="#2e2e2e" stroke-width="1"/></svg>
<svg class="abs" style="left:1565px;top:44px" width="20" height="20" viewBox="0 0 20 20"><path d="M2 2 L18 18 M18 2 L2 18" stroke="#2e2e2e" stroke-width="1.1"/></svg></div>
<div id="side"><div class="abs" style="left:-5px;top:-34px;width:1600px;height:900px">
<svg class="abs" style="left:23px;top:48px" width="24" height="24" viewBox="0 0 24 24"><circle cx="12" cy="11.8" r="9.95" fill="#000"/><ellipse cx="12" cy="11.85" rx="5.3" ry="8.3" fill="#fff"/><path d="M12.2 3.9 C13.6 3.4 14.8 3 16.2 2.9" stroke="#fff" stroke-width="0.7" fill="none"/><path d="M12.2 19.8 C13.6 20.3 14.8 20.7 16.2 20.8" stroke="#fff" stroke-width="0.7" fill="none"/></svg>
<div class="abs" style="left:15px;top:88px;width:40px;height:40px;border-radius:10.5px;background:#4f20f9"></div>
<svg class="abs" style="left:15px;top:88px" width="40" height="40" viewBox="0 0 40 40"><path d="M19.8 14.6 C18.6 12.8 15.6 12.2 11.6 12.2 Q9.2 12.2 9.2 14.4 V24.8 Q9.2 26.6 11.4 26.6 C14.4 26.6 17.6 26.8 19.8 28.6 C22 26.8 25.2 26.6 28.2 26.6 Q30.4 26.6 30.4 24.8 V14.4 Q30.4 12.2 28 12.2 C24 12.2 21 12.8 19.8 14.6Z M19.8 14.6 V28.4" fill="none" stroke="#fff" stroke-width="1.3" stroke-linejoin="round"/></svg>
<svg class="abs" style="left:23px;top:146px" width="24" height="24" viewBox="0 0 24 24"><circle cx="12" cy="3.5" r="1.9" fill="none" stroke="#2f3842" stroke-width="1.1"/><circle cx="3.4" cy="8.3" r="2" fill="#2f3842"/><circle cx="20.6" cy="8.3" r="2" fill="#2f3842"/><path d="M4.2 12 L5.6 21 H18.4 L19.8 12 L15.6 15.6 L12 9.4 L8.4 15.6Z" fill="none" stroke="#2f3842" stroke-width="1.3" stroke-linejoin="round" stroke-linecap="round" /></svg>
<div class="abs" style="left:15px;top:188px;width:40px;height:40px;border-radius:9.5px;background:#d6dfe7"></div>
<div class="abs" style="left:22.5px;top:195px;width:25.5px;height:25.5px;border-radius:1.5px;background:#35a783"></div>
<svg class="abs" style="left:22.5px;top:195px" width="25.5" height="25.5" viewBox="0 0 25.5 25.5"><g transform="translate(4.1,4.2) scale(0.715)"><path d="M22.2819 9.8211a5.9847 5.9847 0 0 0-.5157-4.9108 6.0462 6.0462 0 0 0-6.5098-2.9A6.0651 6.0651 0 0 0 4.9807 4.1818a5.9847 5.9847 0 0 0-3.9977 2.9 6.0462 6.0462 0 0 0 .7427 7.0966 5.98 5.98 0 0 0 .511 4.9107 6.051 6.051 0 0 0 6.5146 2.9001A5.9847 5.9847 0 0 0 13.2599 24a6.0557 6.0557 0 0 0 5.7718-4.2058 5.9894 5.9894 0 0 0 3.9977-2.9001 6.0557 6.0557 0 0 0-.7475-7.0729zm-9.022 12.6081a4.4755 4.4755 0 0 1-2.8764-1.0408l.1419-.0804 4.7783-2.7582a.7948.7948 0 0 0 .3927-.6813v-6.7369l2.02 1.1686a.071.071 0 0 1 .038.052v5.5826a4.504 4.504 0 0 1-4.4945 4.4944zm-9.6607-4.1254a4.4708 4.4708 0 0 1-.5346-3.0137l.142.0852 4.783 2.7582a.7712.7712 0 0 0 .7806 0l5.8428-3.3685v2.3324a.0804.0804 0 0 1-.0332.0615L9.74 19.9502a4.4992 4.4992 0 0 1-6.1408-1.6464zM2.3408 7.8956a4.485 4.485 0 0 1 2.3655-1.9728V11.6a.7664.7664 0 0 0 .3879.6765l5.8144 3.3543-2.0201 1.1685a.0757.0757 0 0 1-.071 0l-4.8303-2.7865A4.504 4.504 0 0 1 2.3408 7.872zm16.5963 3.8558L13.1038 8.364 15.1192 7.2a.0757.0757 0 0 1 .071 0l4.8303 2.7913a4.4944 4.4944 0 0 1-.6765 8.1042v-5.6772a.79.79 0 0 0-.407-.667zm2.0107-3.0231l-.142-.0852-4.7735-2.7818a.7759.7759 0 0 0-.7854 0L9.409 9.2297V6.8974a.0662.0662 0 0 1 .0284-.0615l4.8303-2.7866a4.4992 4.4992 0 0 1 6.6802 4.66zM8.3065 12.863l-2.02-1.1638a.0804.0804 0 0 1-.038-.0567V6.0742a4.4992 4.4992 0 0 1 7.3757-3.4537l-.142.0805L8.704 5.459a.7948.7948 0 0 0-.3927.6813zm1.0976-2.3654l2.602-1.4998 2.6069 1.4998v2.9994l-2.5974 1.4997-2.6067-1.4997Z" fill="#fff" stroke="#fff" stroke-width="0.55"/></g></svg>
<div class="abs" style="left:15px;top:238px;width:40px;height:40px;border-radius:9.5px;background:#d6dfe7"></div>
<div class="abs" style="left:22.2px;top:245px;width:25px;height:25px;border-radius:50%;background:#2b9ff0"></div>
<svg class="abs" style="left:28px;top:251.5px" width="14" height="12" viewBox="0 -0.5 18 15.5"><path d="M5.66 14.5 C12.45 14.5 16.17 8.87 16.17 3.99 C16.17 3.83 16.17 3.67 16.16 3.51 C16.88 2.99 17.5 2.34 18 1.6 C17.34 1.89 16.63 2.09 15.88 2.18 C16.64 1.72 17.23 1 17.5 0.14 C16.79 0.56 16 0.87 15.16 1.03 C14.48 0.32 13.53 -0.13 12.47 -0.13 C10.43 -0.13 8.78 1.52 8.78 3.56 C8.78 3.85 8.81 4.13 8.87 4.4 C5.8 4.25 3.08 2.78 1.26 0.54 C0.94 1.09 0.76 1.72 0.76 2.4 C0.76 3.68 1.41 4.81 2.4 5.47 C1.8 5.45 1.23 5.29 0.73 5.01 L0.73 5.06 C0.73 6.85 2 8.34 3.69 8.68 C3.38 8.76 3.05 8.81 2.72 8.81 C2.48 8.81 2.25 8.79 2.02 8.74 C2.49 10.21 3.86 11.28 5.47 11.31 C4.21 12.3 2.62 12.89 0.89 12.89 C0.59 12.89 0.3 12.87 0.01 12.84 C1.64 13.89 3.58 14.5 5.66 14.5Z" fill="#fff"/></svg>
<svg class="abs" style="left:23px;top:296px" width="24" height="24" viewBox="0 0 24 24"><circle cx="11.5" cy="11.5" r="9.4" fill="none" stroke="#2f3842" stroke-width="1.2"/><path d="M8.8 7.8 L15.8 11.5 L8.8 15.2Z" fill="none" stroke="#2f3842" stroke-width="1.2" stroke-linejoin="round" stroke-linecap="round" /></svg>
<svg class="abs" style="left:23px;top:335px" width="24" height="24" viewBox="0 0 24 24"><path d="M1.8 2.6 L22.2 12.2 L1.8 22.4 L5 12.2Z" fill="none" stroke="#2f3842" stroke-width="1.3" stroke-linejoin="round" stroke-linecap="round" /></svg>
<svg class="abs" style="left:23px;top:376px" width="24" height="24" viewBox="0 0 24 24"><rect x="3.3" y="4.6" width="7.2" height="5.8" rx="1.6" fill="none" stroke="#2f3842" stroke-width="1.2"/><rect x="12.5" y="4.6" width="7.2" height="5.8" rx="1.6" fill="none" stroke="#2f3842" stroke-width="1.2"/><rect x="3.3" y="12.6" width="7.2" height="5.8" rx="1.6" fill="none" stroke="#2f3842" stroke-width="1.2"/><rect x="12.5" y="12.6" width="7.2" height="5.8" rx="1.6" fill="none" stroke="#2f3842" stroke-width="1.2"/></svg>
<svg class="abs" style="left:23px;top:416px" width="24" height="24" viewBox="0 0 24 24"><path d="M11.6 19.6 C6.4 15.6 2.2 12.4 2.2 8.4 C2.2 3.4 8.8 1.6 11.6 6.4 C14.4 1.6 21 3.4 21 8.4 C21 12.4 16.8 15.6 11.6 19.6Z" fill="none" stroke="#2f3842" stroke-width="1.3" stroke-linejoin="round" stroke-linecap="round" /></svg>
<svg class="abs" style="left:23px;top:456px" width="24" height="24" viewBox="0 0 24 24"><rect x="5.4" y="4.2" width="15.8" height="14.2" rx="2" fill="none" stroke="#2f3842" stroke-width="1.2"/><path d="M5.4 7.4 H4 Q2.2 7.4 2.2 9.2 V16.6 Q2.2 18.4 4 18.4 H8" fill="none" stroke="#2f3842" stroke-width="1.2" stroke-linejoin="round" stroke-linecap="round" /><path d="M9 8.6 H17.6 M9 11.6 H14" fill="none" stroke="#2f3842" stroke-width="1.2" stroke-linejoin="round" stroke-linecap="round" /></svg>
<svg class="abs" style="left:23px;top:494px" width="26" height="26" viewBox="0 0 26 26"><path d="M7.4 5.6 H2.4 V23.2 H21.6 V18.6" fill="none" stroke="#2f3842" stroke-width="1.3" stroke-linejoin="round" stroke-linecap="round" /><path d="M17.8 2.6 L23.4 8.4 L19.8 12.4 L20.4 14.8 L16.6 17.6 L9.6 10.6 L12.2 8 L14.6 8.4Z" fill="none" stroke="#2f3842" stroke-width="1.2" stroke-linejoin="round" stroke-linecap="round" /><path d="M12.8 14.2 L7.4 19.8" fill="none" stroke="#2f3842" stroke-width="1.3" stroke-linejoin="round" stroke-linecap="round" /></svg>
<svg class="abs" style="left:23px;top:537px" width="24" height="24" viewBox="0 0 24 24"><path d="M3.8 9.4 V5.4 Q3.8 3.6 5.6 3.6 H19.4 Q21.2 3.6 21.2 5.4 V14.2 Q21.2 16 19.4 16 H7.4" fill="none" stroke="#2f3842" stroke-width="1.2"/><rect x="1.2" y="10.4" width="5.4" height="8.2" rx="1.2" fill="none" stroke="#2f3842" stroke-width="1.2"/><path d="M9.6 18.6 H14.4" stroke="#2f3842" stroke-width="1.2" stroke-linecap="round"/></svg>
<svg class="abs" style="left:23px;top:576px" width="24" height="24" viewBox="0 0 24 24"><circle cx="11.5" cy="11.3" r="9.3" fill="none" stroke="#2f3842" stroke-width="1.2"/><path d="M11.5 6.8 V11.6 L14.8 14.6" fill="none" stroke="#2f3842" stroke-width="1.2" stroke-linejoin="round" stroke-linecap="round" /></svg>
<svg class="abs" style="left:23px;top:615px" width="24" height="24" viewBox="0 0 24 24"><path d="M11.5 3 V13.4 M7 9 L11.5 13.6 L16 9" fill="none" stroke="#2f3842" stroke-width="1.2" stroke-linejoin="round" stroke-linecap="round" /><path d="M2.4 15.4 C2.4 18.4 4 19.6 6 19.6 H17 C19 19.6 20.6 18.4 20.6 15.4" fill="none" stroke="#2f3842" stroke-width="1.2" stroke-linejoin="round" stroke-linecap="round" /></svg>
<svg class="abs" style="left:23px;top:656px" width="24" height="24" viewBox="0 0 24 24"><path d="M11.5 2 L21.2 6.6 V17 L11.5 21.8 L2 17 V6.6Z M2 6.6 L11.5 11.4 L21.2 6.6 M11.5 11.4 V21.8" fill="none" stroke="#2f3842" stroke-width="1.2" stroke-linejoin="round" stroke-linecap="round" /></svg>
<svg class="abs" style="left:23px;top:696px" width="24" height="24" viewBox="0 0 24 24"><path d="M8.25 5.87 L9.25 4.98 L9.45 2.63 Q11.50 1.60 13.55 2.63 L13.75 4.98 L14.75 5.87 L16.03 6.29 L18.16 5.29 Q20.07 6.55 20.20 8.84 L18.27 10.18 L18.00 11.50 L18.27 12.82 L20.20 14.16 Q20.07 16.45 18.16 17.71 L16.03 16.71 L14.75 17.13 L13.75 18.02 L13.55 20.37 Q11.50 21.40 9.45 20.37 L9.25 18.02 L8.25 17.13 L6.97 16.71 L4.84 17.71 Q2.93 16.45 2.80 14.16 L4.73 12.82 L5.00 11.50 L4.73 10.18 L2.80 8.84 Q2.93 6.55 4.84 5.29 L6.97 6.29 L8.25 5.87 Z" fill="none" stroke="#2f3842" stroke-width="1.2" stroke-linejoin="round" stroke-linecap="round" /><circle cx="11.5" cy="11.5" r="3.2" fill="none" stroke="#2f3842" stroke-width="1.2"/></svg>
<svg class="abs" style="left:23px;top:735px" width="24" height="26" viewBox="0 0 24 26"><path d="M8.6 16.4 C7.8 13.8 4.2 12.6 4.2 8.6 C4.2 4.4 7.6 1.8 12 1.8 C16.4 1.8 19.8 4.4 19.8 8.6 C19.8 12.6 16.2 13.8 15.4 16.4Z" fill="none" stroke="#2f3842" stroke-width="1.2" stroke-linejoin="round" stroke-linecap="round" /><path d="M8.8 18.6 H15.2 M9.2 21 H14.8 M10.2 23.4 H13.8" fill="none" stroke="#2f3842" stroke-width="1.2" stroke-linejoin="round" stroke-linecap="round" /></svg>
<svg class="abs" style="left:27px;top:781px" width="16" height="14" viewBox="0 0 16 14"><path d="M3.4 1.2 H9.6 C12.2 1.2 13.6 3 13.6 5 C13.6 7 12.2 8.8 9.6 8.8 H6 C5 8.8 4 8.6 3.4 8.2 C1.6 7.2 1 5.6 1.4 3.8 C1.6 2.4 2.4 1.6 3.4 1.2Z" fill="#7ba6f7"/><path d="M4.8 2.4 H10.4 C13 2.4 14.4 4.2 14.4 6.2 C14.4 8.2 13 10 10.4 10 H9.2 L7.6 12.8 L6.6 10 H4.8 C2.6 10 2 8.2 2 6.2 C2 4.2 2.6 2.4 4.8 2.4Z" fill="#1f5fe8"/></svg>
<div class="abs" style="left:15px;top:816.7px;width:40px;height:1px;background:#a9b7c5"></div>
<svg class="abs" style="left:23px;top:830px" width="24" height="16" viewBox="0 0 24 16"><circle cx="4.8" cy="8" r="1.85" fill="#3a444e"/><circle cx="12" cy="8" r="1.85" fill="#3a444e"/><circle cx="19" cy="8" r="1.85" fill="#3a444e"/></svg>
</div></div>
<div id="addr"><div class="abs" style="left:-70px;top:-84px;width:1600px;height:900px">
<svg class="abs" style="left:80px;top:96px" width="24" height="24" viewBox="0 0 24 24"><path d="M14.2 5.4 L7.6 11.6 L14.2 17.8" fill="none" stroke="#27303a" stroke-width="1.35"/></svg>
<svg class="abs" style="left:128px;top:96px" width="24" height="24" viewBox="0 0 24 24"><path d="M7.8 5.4 L14.2 11.6 L7.8 17.8" fill="none" stroke="#aab2ba" stroke-width="1.4"/></svg>
<svg class="abs" style="left:166px;top:95px" width="26" height="26" viewBox="0 0 26 26"><path d="M18.4 15.3 A7 7 0 1 1 17.0 8.2" fill="none" stroke="#27303a" stroke-width="1.4"/><path d="M20 5.9 L20 10.9 L15 10.75Z" fill="#27303a"/></svg>
<div class="abs" style="left:214.8px;top:96.8px;width:38.6px;height:21.2px;border:1.4px solid #5a3af6;border-radius:4.5px;background:#fbfaff"></div>
<div class="abs" style="left:221.2px;font-size:13px;font-weight:bold;letter-spacing:-0.767px;top:99.7px;line-height:16px;color:#4f20f9;white-space:pre">VPN</div>
<svg class="abs" style="left:262px;top:98px" width="16" height="20" viewBox="0 0 16 20"><rect x="2" y="8.5" width="12.4" height="9.2" rx="1.6" fill="#27303a"/><path d="M5.2 9 V6 C5.2 1.6 11.2 1.6 11.2 6 V9" fill="none" stroke="#27303a" stroke-width="1.7"/></svg>
<div class="abs" style="left:293px;font-size:19.3px;letter-spacing:2.074px;top:98.2px;line-height:22px;color:#66788a;white-space:pre">www.</div>
<div class="abs" style="left:346px;font-size:19.3px;letter-spacing:0.354px;top:98.2px;line-height:22px;color:#141c26;white-space:pre">lhv.ee</div>
<div class="abs" style="left:398.5px;font-size:19.3px;letter-spacing:0.754px;top:98.2px;line-height:22px;color:#66788a;white-space:pre">/ibank/#/cf?path=%2Fportfolio%2Fview.cfm%3Fvi%3D0</div>
<div class="abs" style="left:1005px;top:96.2px;width:83px;height:22.6px;border:1.5px solid #2b3540;border-radius:12px"></div>
<div class="abs" style="left:1014.5px;font-size:10.2px;font-weight:bold;letter-spacing:0.099px;top:101.4px;line-height:13px;color:#3a444e;white-space:pre">AI PROMPTS</div>
<svg class="abs" style="left:1097px;top:97px" width="22" height="22" viewBox="0 0 22 22"><circle cx="10.8" cy="10.8" r="7.6" fill="none" stroke="#27303a" stroke-width="1.3"/><circle cx="8.3" cy="8.7" r="1" fill="#27303a"/><circle cx="13.3" cy="8.7" r="1" fill="#27303a"/><path d="M7.8 13.4 H13.8" stroke="#27303a" stroke-width="1.3"/></svg>
<svg class="abs" style="left:1131px;top:98px" width="22" height="22" viewBox="0 0 22 22"><path d="M6.2 4.1 H2.75 V16.9 H17.1 V13.5" fill="none" stroke="#27303a" stroke-width="1.4"/><path d="M13.4 2.3 L17.7 6.3 L15 9.3 L15.5 11.3 L12.4 13.5 L6.8 8.2 L8.8 6.2 L10.7 6.6Z" fill="none" stroke="#27303a" stroke-width="1.3" stroke-linejoin="round"/><path d="M9.2 10.6 L6.2 13.8" stroke="#27303a" stroke-width="1.4"/></svg>
<svg class="abs" style="left:1163px;top:98px" width="22" height="22" viewBox="0 0 22 22"><path d="M3.4 5.5 H6 L7.4 3.3 H12.4 L13.8 5.5 H16.6 Q17.4 5.5 17.4 6.3 V15.7 Q17.4 16.5 16.6 16.5 H3.4 Q2.6 16.5 2.6 15.7 V6.3 Q2.6 5.5 3.4 5.5Z" fill="none" stroke="#27303a" stroke-width="1.3" stroke-linejoin="round"/><circle cx="9.9" cy="10.5" r="3" fill="none" stroke="#27303a" stroke-width="1.3"/></svg>
<svg class="abs" style="left:1196px;top:98px" width="20" height="22" viewBox="0 0 20 22"><path d="M10 1.9 L16 4 Q16.8 4.3 16.8 5.2 V10.4 C16.8 14.4 13.6 17 10 18.5 C6.4 17 3.2 14.4 3.2 10.4 V5.2 Q3.2 4.3 4 4Z" fill="#27303a"/><path d="M5.7 10.5 L9 13 L14.5 7.3" fill="none" stroke="#fff" stroke-width="1.6"/></svg>
<svg class="abs" style="left:1228px;top:98px" width="22" height="22" viewBox="0 0 22 22"><path d="M3.2 3.6 L18.6 10.2 L3.2 16.8 L6.8 10.2Z" fill="none" stroke="#27303a" stroke-width="1.3" stroke-linejoin="round"/></svg>
<svg class="abs" style="left:1260px;top:98px" width="22" height="22" viewBox="0 0 22 22"><path d="M10.9 16.8 C6.4 13.6 3 10.8 3 7.2 C3 3 8.6 1.6 10.9 5.6 C13.2 1.6 18.8 3 18.8 7.2 C18.8 10.8 15.4 13.6 10.9 16.8Z" fill="none" stroke="#27303a" stroke-width="1.3" stroke-linejoin="round"/></svg>
<svg class="abs" style="left:1302px;top:101px" width="26" height="12" viewBox="0 0 26 12"><rect x="0" y="0" width="26" height="12" fill="#fcfcfc"/><rect x="2.6" y="1.6" width="5" height="8.6" fill="#4a4a4a"/><path d="M2.6 4 H7.6 M2.6 6 H7.6 M2.6 8 H7.6" stroke="#ddd" stroke-width="0.6"/><rect x="11.6" y="5.2" width="11.4" height="1.1" fill="#999"/></svg>
<svg class="abs" style="left:1346px;top:98px" width="22" height="22" viewBox="0 0 22 22"><path d="M10.6 3 V13 M6.2 8.8 L10.6 13.2 L15 8.8" fill="none" stroke="#27303a" stroke-width="1.3"/><path d="M3 13.2 V16.8 H18.2 V13.2" fill="none" stroke="#27303a" stroke-width="1.3"/></svg>
<svg class="abs" style="left:1387px;top:98px" width="22" height="22" viewBox="0 0 22 22"><path d="M3 4.8 H19.4 M3 10 H19.4 M3 15.2 H19.4" stroke="#27303a" stroke-width="1.3"/><path d="M7.6 2.4 V7.2 M14.8 7.6 V12.4 M7 12.8 V17.6" stroke="#27303a" stroke-width="1.5"/></svg>
</div></div>
<div id="ext"><div class="abs" style="left:-1423px;top:-84px;width:1600px;height:900px">
<svg class="abs" style="left:1429.8px;top:97.9px" width="20" height="20" viewBox="0 0 20 20"><defs><linearGradient id="fgb" x1="0" y1="0" x2="1" y2="0"><stop offset="0" stop-color="#3d9ef6"/><stop offset="0.45" stop-color="#1a7fe2"/><stop offset="0.8" stop-color="#0f55b8"/><stop offset="1" stop-color="#08307a"/></linearGradient><linearGradient id="fhb" x1="0" y1="0" x2="0.3" y2="1"><stop offset="0" stop-color="#ffffff"/><stop offset="0.6" stop-color="#e6f3ff"/><stop offset="1" stop-color="#9fd0ff"/></linearGradient></defs><path d="M1.8 5 C2.6 2.6 5 1.6 7 1.6 H13.9 C16.4 1.8 18.6 3.6 18.9 5.4 L11.8 15.3 V18.4 Q10.3 19.9 9.1 18.4 V15.3 L1.8 5.7Z" fill="url(#fgb)"/><path d="M2.6 7 L9 15.6" stroke="#06245c" stroke-width="1.1" opacity="0.75"/><path d="M18.6 6 L11.7 15.5" stroke="#041a48" stroke-width="1.2" opacity="0.85"/><path d="M5.9 2.2 H12.6 L8.3 8.7Z" fill="url(#fhb)"/><path d="M8.3 8.7 L12.6 2.2 L14 4 L10.4 9Z" fill="#5cb0ff" opacity="0.55"/></svg>
<svg class="abs" style="left:1462px;top:98px" width="16" height="20" viewBox="0 0 16 20"><path d="M1.4 9.6 H14.6" stroke="#6cc04a" stroke-width="1.6"/><path d="M5.4 0.8 L9.6 5.8 H7.4 V13.4 H3.4 V5.8 H1.2Z" fill="#2f8ae8"/><path d="M10.2 19.2 L6 14.2 H8.2 V6.6 H12.2 V14.2 H14.4Z" fill="#e8303a"/></svg>
<svg class="abs" style="left:1491px;top:99px" width="18" height="18" viewBox="0 0 18 18"><path d="M3.4 4.8 L5 0.8 L7.2 2.2 H10.8 L13 0.8 L14.6 4.8 L16 5.4 V6.4 H2 V5.4Z" fill="#a9a9a9"/><path d="M4.4 6.6 H13.6 C13.6 9.8 11.6 11 9 11 C6.4 11 4.4 9.8 4.4 6.6Z" fill="#a9a9a9"/><path d="M0.8 17.4 C0.8 13.4 3.4 11.6 6 11.2 L9 14.6 L12 11.2 C14.6 11.6 17.2 13.4 17.2 17.4Z" fill="#a9a9a9"/><path d="M9 14.6 L7.8 17.4 H10.2Z" fill="#fff"/><rect x="5.6" y="7.4" width="2.4" height="1.2" fill="#e8e8e8"/><rect x="10" y="7.4" width="2.4" height="1.2" fill="#e8e8e8"/></svg>
<svg class="abs" style="left:1520.5px;top:97.5px" width="19" height="21" viewBox="0 0 19 21"><path d="M9.5 0.8 C12 2.6 15 3.4 18.2 3.6 C18.2 11.4 16 16.6 9.5 20.2 C3 16.6 0.8 11.4 0.8 3.6 C4 3.4 7 2.6 9.5 0.8Z" fill="#800000"/><path d="M4.6 6.8 V10.2 C4.6 12.8 8.2 12.8 8.2 10.2 V6.8" fill="none" stroke="#fff" stroke-width="1.5"/><circle cx="12.2" cy="9.6" r="2.6" fill="none" stroke="#fff" stroke-width="1.5"/><path d="M8.2 6.8 V12.2" stroke="#fff" stroke-width="1.5"/></svg>
<svg class="abs" style="left:1550px;top:98px" width="20" height="20" viewBox="0 0 20 20"><path d="M9.6 2.6 L16.8 6 V13.6 L9.6 17.2 L2.4 13.6 V6Z M2.4 6 L9.6 9.6 L16.8 6 M9.6 9.6 V17.2" fill="none" stroke="#27303a" stroke-width="1.2" stroke-linejoin="round"/></svg>
<div class="abs" style="left:1580px;top:93px;width:7.5px;height:29.5px;border-radius:3.75px;background:#4f20f9"></div>
</div></div>
<div id="page">
  <div id="white"></div>
  <div id="sbar"></div>
  <div class="abs" style="left:-70px;top:-138px;width:1600px;height:900px"><div class="cb" style="top:127px"><svg width="15" height="15" viewBox="0 0 15 15" style="position:absolute;left:0;top:0"><path d="M2.9 7.6 L6.2 10.7 L12 2.9" fill="none" stroke="#fff" stroke-width="2.3"/></svg></div><div class="cl" style="top:123px">Kasvukonto<i class="bu"></i><span class="nm">EE217700772007110965</span></div>
<div class="cb" style="top:157px"><svg width="15" height="15" viewBox="0 0 15 15" style="position:absolute;left:0;top:0"><path d="M2.9 7.6 L6.2 10.7 L12 2.9" fill="none" stroke="#fff" stroke-width="2.3"/></svg></div><div class="cl" style="top:153px">Kasvukonto<i class="bu"></i><span class="nm">EE177700772007110991</span></div>
<div class="cb" style="top:187px"><svg width="15" height="15" viewBox="0 0 15 15" style="position:absolute;left:0;top:0"><path d="M2.9 7.6 L6.2 10.7 L12 2.9" fill="none" stroke="#fff" stroke-width="2.3"/></svg></div><div class="cl" style="top:183px">Kasvukonto<i class="bu"></i><span class="nm">EE427700772007111026</span></div>
<div class="cb" style="top:217px"><svg width="15" height="15" viewBox="0 0 15 15" style="position:absolute;left:0;top:0"><path d="M2.9 7.6 L6.2 10.7 L12 2.9" fill="none" stroke="#fff" stroke-width="2.3"/></svg></div><div class="cl" style="top:213px">Kasvukonto<i class="bu"></i><span class="nm">EE797700772007111039</span></div>
<div class="abs" style="left:940px;top:253px;width:167px;height:24.5px;background:#e6e6e6;border-radius:4px;font-size:13.7px;font-weight:bold;color:#333;text-align:center;line-height:23.5px">Näita valitud kontosid</div>
<div class="abs" style="left:500px;top:313px;font-size:20px;font-weight:bold;color:#1a1a1a;line-height:24px">Raha</div>
<div class="abs" style="left:1439px;top:316px;width:77px;height:24.5px;background:#e6e6e6;border-radius:4px;font-size:13.7px;font-weight:bold;color:#333;text-align:center;line-height:23.5px">Limiidid</div>
<div class="abs" style="left:1522px;top:316px;width:24.5px;height:24.5px;background:#e6e6e6;border-radius:50%"><svg width="24.5" height="24.5" viewBox="0 0 24.5 24.5"><path d="M8 14.2 L12.25 10 L16.5 14.2" fill="none" stroke="#333" stroke-width="1.7"/></svg></div>
<div class="ln" style="left:500px;top:347px;width:1047px"></div>
<div class="ln" style="left:500px;top:383px;width:1047px"></div>
<div class="ln" style="left:500px;top:470px;width:1047px"></div>
<div class="ln" style="left:500px;top:557px;width:1047px"></div>
<div class="ln" style="left:500px;top:644px;width:1047px"></div>
<div class="ln" style="left:500px;top:688px;width:1047px"></div>
<div class="ln" style="left:500px;top:731px;width:1047px"></div>
<div class="ln" style="left:500px;top:818px;width:1047px"></div>
<div class="ln" style="left:500px;top:862px;width:1047px"></div>
<div class="ln" style="left:550px;top:427px;width:997px"></div>
<div class="ln" style="left:550px;top:514px;width:997px"></div>
<div class="ln" style="left:550px;top:601px;width:997px"></div>
<div class="ln" style="left:550px;top:775px;width:997px"></div>
<div class="th" style="left:513px;top:358.4px">KONTO</div>
<div class="th" style="left:985px;top:358.4px">VALUUTA</div>
<div class="th r" style="left:993px;width:150px;top:358.4px">KURSS</div>
<div class="th r" style="left:1063px;width:150px;top:358.4px">SALDO</div>
<div class="th r" style="left:1147px;width:150px;top:358.4px">INTRESS</div>
<div class="th r" style="left:1279px;width:150px;top:358.4px">BRONEERITUD</div>
<div class="th r" style="left:1384px;width:150px;top:358.4px">VABA JÄÄK</div>
<div class="td lk" style="left:556.3px;top:395.4px">Margus Meigo<i class="bu"></i><span class="nm">EE407700771001711009</span></div>
<div class="td" style="left:985px;top:395.4px;letter-spacing:-0.5px">EUR</div>
<div class="td r nm" style="left:1023px;width:120px;top:395.4px">1.0000</div>
<div class="td r nm g" style="left:1093px;width:120px;top:395.4px">0.00</div>
<div class="td r nm g" style="left:1177px;width:120px;top:395.4px">0.00</div>
<div class="td r nm g" style="left:1309px;width:120px;top:395.4px">0.00</div>
<div class="td r nm g b" style="left:1414px;width:120px;top:395.4px">0.00</div>
<div class="td" style="left:985px;top:438.4px;letter-spacing:-0.5px">RON</div>
<div class="td r nm" style="left:1023px;width:120px;top:438.4px">0.2025</div>
<div class="td r nm " style="left:1093px;width:120px;top:438.4px">0.03</div>
<div class="td r nm g" style="left:1177px;width:120px;top:438.4px">0.00</div>
<div class="td r nm g" style="left:1309px;width:120px;top:438.4px">0.00</div>
<div class="td r nm b" style="left:1414px;width:120px;top:438.4px">0.03</div>
<div class="td lk" style="left:512.5px;top:482.4px">Kasvukonto<i class="bu"></i><span class="nm">EE527700772007108518</span></div>
<div class="td" style="left:985px;top:482.4px;letter-spacing:-0.5px">EUR</div>
<div class="td r nm" style="left:1023px;width:120px;top:482.4px">1.0000</div>
<div class="td r nm g" style="left:1093px;width:120px;top:482.4px">0.00</div>
<div class="td r nm g" style="left:1177px;width:120px;top:482.4px">0.00</div>
<div class="td r nm lk" style="left:1309px;width:120px;top:482.4px">-0.16</div>
<div class="td r nm lk b" style="left:1414px;width:120px;top:482.4px">0.00</div>
<div class="td" style="left:985px;top:525.4px;letter-spacing:-0.5px">USD</div>
<div class="td r nm" style="left:1023px;width:120px;top:525.4px">0.9195</div>
<div class="td r nm " style="left:1093px;width:120px;top:525.4px">0.01</div>
<div class="td r nm g" style="left:1177px;width:120px;top:525.4px">0.00</div>
<div class="td r nm g" style="left:1309px;width:120px;top:525.4px">0.00</div>
<div class="td r nm b" style="left:1414px;width:120px;top:525.4px">0.01</div>
<div class="td lk" style="left:512.5px;top:569.4px">Kasvukonto<i class="bu"></i><span class="nm">EE757700772007108589</span></div>
<div class="td" style="left:985px;top:569.4px;letter-spacing:-0.5px">EUR</div>
<div class="td r nm" style="left:1023px;width:120px;top:569.4px">1.0000</div>
<div class="td r nm g" style="left:1093px;width:120px;top:569.4px">0.00</div>
<div class="td r nm g" style="left:1177px;width:120px;top:569.4px">0.00</div>
<div class="td r nm g" style="left:1309px;width:120px;top:569.4px">0.00</div>
<div class="td r nm g b" style="left:1414px;width:120px;top:569.4px">0.00</div>
<div class="td" style="left:985px;top:612.4px;letter-spacing:-0.5px">USD</div>
<div class="td r nm" style="left:1023px;width:120px;top:612.4px">0.9195</div>
<div class="td r nm " style="left:1093px;width:120px;top:612.4px">0.01</div>
<div class="td r nm g" style="left:1177px;width:120px;top:612.4px">0.00</div>
<div class="td r nm g" style="left:1309px;width:120px;top:612.4px">0.00</div>
<div class="td r nm b" style="left:1414px;width:120px;top:612.4px">0.01</div>
<div class="td lk" style="left:512.5px;top:656.4px">Kasvukonto<i class="bu"></i><span class="nm">EE157700772007108602</span></div>
<div class="td" style="left:985px;top:656.4px;letter-spacing:-0.5px">EUR</div>
<div class="td r nm" style="left:1023px;width:120px;top:656.4px">1.0000</div>
<div class="td r nm g" style="left:1093px;width:120px;top:656.4px">0.00</div>
<div class="td r nm g" style="left:1177px;width:120px;top:656.4px">0.00</div>
<div class="td r nm g" style="left:1309px;width:120px;top:656.4px">0.00</div>
<div class="td r nm g b" style="left:1414px;width:120px;top:656.4px">0.00</div>
<div class="td lk" style="left:512.5px;top:699.4px">Kasvukonto<i class="bu"></i><span class="nm">EE457700772007108644</span></div>
<div class="td" style="left:985px;top:699.4px;letter-spacing:-0.5px">EUR</div>
<div class="td r nm" style="left:1023px;width:120px;top:699.4px">1.0000</div>
<div class="td r nm g" style="left:1093px;width:120px;top:699.4px">0.00</div>
<div class="td r nm g" style="left:1177px;width:120px;top:699.4px">0.00</div>
<div class="td r nm g" style="left:1309px;width:120px;top:699.4px">0.00</div>
<div class="td r nm g b" style="left:1414px;width:120px;top:699.4px">0.00</div>
<div class="td lk" style="left:512.5px;top:743.4px">Kasvukonto<i class="bu"></i><span class="nm">EE387700772007108673</span></div>
<div class="td" style="left:985px;top:743.4px;letter-spacing:-0.5px">EUR</div>
<div class="td r nm" style="left:1023px;width:120px;top:743.4px">1.0000</div>
<div class="td r nm g" style="left:1093px;width:120px;top:743.4px">0.00</div>
<div class="td r nm g" style="left:1177px;width:120px;top:743.4px">0.00</div>
<div class="td r nm g" style="left:1309px;width:120px;top:743.4px">0.00</div>
<div class="td r nm g b" style="left:1414px;width:120px;top:743.4px">0.00</div>
<div class="td" style="left:985px;top:786.4px;letter-spacing:-0.5px">USD</div>
<div class="td r nm" style="left:1023px;width:120px;top:786.4px">0.9195</div>
<div class="td r nm " style="left:1093px;width:120px;top:786.4px">0.01</div>
<div class="td r nm g" style="left:1177px;width:120px;top:786.4px">0.00</div>
<div class="td r nm g" style="left:1309px;width:120px;top:786.4px">0.00</div>
<div class="td r nm b" style="left:1414px;width:120px;top:786.4px">0.01</div>
<div class="td lk" style="left:512.5px;top:830.4px">Kasvukonto<i class="bu"></i><span class="nm">EE367700772007108709</span></div>
<div class="td" style="left:985px;top:830.4px;letter-spacing:-0.5px">EUR</div>
<div class="td r nm" style="left:1023px;width:120px;top:830.4px">1.0000</div>
<div class="td r nm g" style="left:1093px;width:120px;top:830.4px">0.00</div>
<div class="td r nm g" style="left:1177px;width:120px;top:830.4px">0.00</div>
<div class="td r nm g" style="left:1309px;width:120px;top:830.4px">0.00</div>
<div class="td r nm g b" style="left:1414px;width:120px;top:830.4px">0.00</div>
<svg class="abs" style="left:516px;top:393px" width="28" height="21" viewBox="0 0 28 21"><defs><linearGradient id="cg" x1="0" y1="0" x2="1" y2="0"><stop offset="0" stop-color="#dedede"/><stop offset="0.45" stop-color="#e9e9e9"/><stop offset="0.55" stop-color="#cfcfcf"/><stop offset="0.62" stop-color="#f6f6f6"/><stop offset="1" stop-color="#ededed"/></linearGradient><filter id="cb"><feGaussianBlur stdDeviation="0.35"/></filter></defs><g filter="url(#cb)"><rect x="0.6" y="18.4" width="26.6" height="1.3" fill="#cfcfcf"/><rect x="0.9" y="0.9" width="26" height="18" rx="0.8" fill="url(#cg)"/><path d="M14.8 0.9 L7.4 18.9 L11.4 18.9 L17.2 0.9Z" fill="#d6d6d6"/><path d="M16.4 6.6 L8.6 18.6 L19.2 18.6Z" fill="#fbfbfb"/><path d="M17.2 0.9 L19.4 18.6 L16.4 6.6Z" fill="#d2d2d2"/><rect x="3.8" y="7.2" width="3.3" height="2.8" rx="0.5" fill="#c6c6c6"/><rect x="19.9" y="12.9" width="3" height="3" fill="#ea1226"/><rect x="22.9" y="12.9" width="2.5" height="3" fill="#ff9a12"/><text x="19.3" y="5.9" font-family="Liberation Sans" font-weight="bold" font-style="italic" font-size="3.7" fill="#222" textLength="6.5" lengthAdjust="spacingAndGlyphs">LHV</text></g></svg>
<div class="abs" style="left:1579px;top:393px;width:14px;height:53.7px;background:#a8a8a8"></div>
<svg class="abs" style="left:1577px;top:138px" width="18" height="18"><path d="M4.5 11.5 L9 6.5 L13.5 11.5Z" fill="#505050"/></svg>
<svg class="abs" style="left:1577px;top:848px" width="18" height="18"><path d="M4.5 7 L9 12 L13.5 7Z" fill="#505050"/></svg></div>
</div>
<svg class="abs" style="left:1590px;top:410px" width="8" height="24"><path d="M6.2 3.6 C3.6 6.4 3.6 16.6 6.2 19.4" fill="none" stroke="#fff" stroke-width="3.2"/><path d="M6 4.6 C4.6 7.2 4.6 15.8 6 18.4" fill="none" stroke="#111" stroke-width="2.2"/></svg>
<div id="bot"><div class="abs" style="left:0;top:-872px;width:1600px;height:900px">
<div class="abs" style="left:0;top:872.5px;width:19.5px;height:27.5px;background:#3b3b3b;border-radius:4px;border:1px solid #1c1c1c"></div>
<svg class="abs" style="left:0px;top:872px" width="20" height="28" viewBox="0 0 20 28"><path d="M11.5 9 L7 14 L11.5 19" fill="none" stroke="#e8e8e8" stroke-width="1.3"/></svg>
<svg class="abs" style="left:21px;top:878px" width="22" height="18" viewBox="0 0 22 18"><defs><linearGradient id="dk" x1="0" y1="0" x2="1" y2="0.6"><stop offset="0" stop-color="#3f7876"/><stop offset="1" stop-color="#68a09e"/></linearGradient></defs><rect x="0" y="0" width="22" height="17.6" rx="1.5" fill="url(#dk)"/><rect x="0" y="0" width="4.4" height="17.6" rx="1" fill="#245250"/><rect x="0" y="15.6" width="22" height="2" fill="#2f6462" opacity="0.7"/></svg>
<svg class="abs" style="left:60.5px;top:878.5px" width="14" height="15.5" viewBox="0 0 14 15.5"><rect x="0.3" y="0.6" width="12.6" height="14.2" rx="1" fill="#8fb58e" stroke="#6a946b" stroke-width="0.6"/><path d="M2.4 9.2 H10.4 M2.4 11.4 H10.4" stroke="#6f966f" stroke-width="0.7"/><path d="M4 9.4 L4.8 7 L10.6 1.8 L12.4 3.6 L6.4 8.8Z" fill="#2a63b0"/><path d="M4 9.4 L4.8 7 L6.4 8.8Z" fill="#e3c58a"/></svg>
<div class="abs" style="left:84px;font-size:18.5px;letter-spacing:0.430px;top:876.4px;line-height:21px;color:#fff;white-space:pre">[*Un...</div>
<svg class="abs" style="left:152.5px;top:879px" width="15" height="14" viewBox="0 0 15 14"><path d="M0.4 1.2 H5.6 L6.8 2.6 H14.4 V13.2 H0.4Z" fill="#707070"/><rect x="0.4" y="1.2" width="5.4" height="1.2" fill="#4a8f8a"/><rect x="0.4" y="3.6" width="14" height="9.6" rx="0.8" fill="#8a8a8a"/><rect x="3.2" y="5.4" width="8.6" height="6.6" fill="#555"/><rect x="4.6" y="6.4" width="5.8" height="1.9" fill="#c9c9c9"/><rect x="4.6" y="9.2" width="5.8" height="1.9" fill="#c9c9c9"/><path d="M3.9 5.4 V12 M11.1 5.4 V12" stroke="#ddd" stroke-width="0.7" stroke-dasharray="1 0.8"/></svg>
<div class="abs" style="left:176.4px;font-size:18.5px;letter-spacing:-0.027px;top:876.4px;line-height:21px;color:#fff;white-space:pre">Videos</div>
<svg class="abs" style="left:246px;top:879.2px" width="14.5" height="14" viewBox="0 0 14.5 14"><defs><linearGradient id="sh" x1="0" y1="0" x2="0" y2="1"><stop offset="0" stop-color="#5a7af0"/><stop offset="1" stop-color="#6a62e0"/></linearGradient></defs><rect x="0" y="0" width="14.4" height="13.8" rx="1.6" fill="url(#sh)"/><rect x="2.2" y="2.4" width="8.4" height="7" fill="none" stroke="#fff" stroke-width="0.9" stroke-dasharray="1.4 0.9"/><path d="M10.6 7.6 V12 M8.4 9.8 H12.8" stroke="#fff" stroke-width="1"/></svg>
<div class="abs" style="left:269.6px;font-size:18.5px;letter-spacing:-0.499px;top:876.4px;line-height:21px;color:#fff;white-space:pre">Save...</div>
<svg class="abs" style="left:338.6px;top:879.4px" width="15" height="13.4" viewBox="0 0 15 13.4"><rect x="0.3" y="0.3" width="14.2" height="12.6" rx="1.4" fill="#2c4a36" stroke="#24402e" stroke-width="0.6"/><path d="M2.6 3 L5 4.3 L2.6 5.6" fill="none" stroke="#a9c4b0" stroke-width="0.8"/><rect x="5.6" y="6" width="3.2" height="0.8" fill="#a9c4b0"/></svg>
<div class="abs" style="left:363.8px;font-size:18.5px;letter-spacing:0.087px;top:876.4px;line-height:21px;color:#fff;white-space:pre">[ma...</div>
<svg class="abs" style="left:431.2px;top:879.4px" width="15" height="13.4" viewBox="0 0 15 13.4"><rect x="0.3" y="0.3" width="14.2" height="12.6" rx="1.4" fill="#2c4a36" stroke="#24402e" stroke-width="0.6"/><path d="M2.6 3 L5 4.3 L2.6 5.6" fill="none" stroke="#a9c4b0" stroke-width="0.8"/><rect x="5.6" y="6" width="3.2" height="0.8" fill="#a9c4b0"/></svg>
<div class="abs" style="left:456.3px;font-size:18.5px;letter-spacing:0.227px;top:876.4px;line-height:21px;color:#fff;white-space:pre">[ma...</div>
<svg class="abs" style="left:524.2px;top:878.7px" width="15.4" height="15.2" viewBox="0 0 15.4 15.2"><rect width="15.2" height="15" rx="0.8" fill="#7a3322"/><text x="7.6" y="11.4" font-family="Liberation Sans" font-weight="bold" font-style="italic" font-size="10.5" text-anchor="middle" fill="#cdb9a8">Fz</text></svg>
<div class="abs" style="left:549.3px;font-size:18.5px;letter-spacing:0.168px;top:876.4px;line-height:21px;color:#fff;white-space:pre">[vho...</div>
<svg class="abs" style="left:616.8px;top:879px" width="16" height="14" viewBox="0 0 16 14"><path d="M0.6 1.4 Q0.6 0.6 1.4 0.6 H5.4 L6.8 2.2 H14.6 Q15.4 2.2 15.4 3 V12.6 Q15.4 13.4 14.6 13.4 H1.4 Q0.6 13.4 0.6 12.6Z" fill="#6e6e6e"/><path d="M0.6 1.4 Q0.6 0.6 1.4 0.6 H5.4 L6.6 2 H0.6Z" fill="#3f8f88"/><rect x="0.6" y="3.4" width="14.8" height="10" rx="0.9" fill="#838383"/></svg>
<div class="abs" style="left:642px;font-size:18.5px;letter-spacing:-0.005px;top:876.4px;line-height:21px;color:#fff;white-space:pre">mai_...</div>
<svg class="abs" style="left:710.6px;top:879.2px" width="14.5" height="14" viewBox="0 0 14.5 14"><defs><linearGradient id="sh" x1="0" y1="0" x2="0" y2="1"><stop offset="0" stop-color="#5a7af0"/><stop offset="1" stop-color="#6a62e0"/></linearGradient></defs><rect x="0" y="0" width="14.4" height="13.8" rx="1.6" fill="url(#sh)"/><rect x="2.2" y="2.4" width="8.4" height="7" fill="none" stroke="#fff" stroke-width="0.9" stroke-dasharray="1.4 0.9"/><path d="M10.6 7.6 V12 M8.4 9.8 H12.8" stroke="#fff" stroke-width="1"/></svg>
<div class="abs" style="left:735px;font-size:18.5px;letter-spacing:-0.649px;top:876.4px;line-height:21px;color:#fff;white-space:pre">Save...</div>
<svg class="abs" style="left:803.7px;top:879.2px" width="14.5" height="14" viewBox="0 0 14.5 14"><defs><linearGradient id="sh" x1="0" y1="0" x2="0" y2="1"><stop offset="0" stop-color="#5a7af0"/><stop offset="1" stop-color="#6a62e0"/></linearGradient></defs><rect x="0" y="0" width="14.4" height="13.8" rx="1.6" fill="url(#sh)"/><rect x="2.2" y="2.4" width="8.4" height="7" fill="none" stroke="#fff" stroke-width="0.9" stroke-dasharray="1.4 0.9"/><path d="M10.6 7.6 V12 M8.4 9.8 H12.8" stroke="#fff" stroke-width="1"/></svg>
<div class="abs" style="left:827.6px;font-size:18.5px;font-weight:bold;letter-spacing:0.086px;top:876.4px;line-height:21px;color:#fff;white-space:pre">Sav...</div>
<svg class="abs" style="left:897.8px;top:878.2px" width="12.4" height="15.8" viewBox="0 0 12.4 15.8"><rect x="0.2" y="0.2" width="12" height="15.4" rx="0.8" fill="#0a3218" stroke="#114a26" stroke-width="0.5"/><path d="M3 3.4 H7 M3 5.6 H6 M3 7.8 H6.6" stroke="#1f6a38" stroke-width="0.8"/></svg>
<div class="abs" style="left:921.3px;font-size:18.5px;letter-spacing:-0.105px;top:876.4px;line-height:21px;color:#fff;white-space:pre">[Psy...</div>
<div class="abs" style="left:984.2px;top:872px;width:92.5px;height:28px;background:#2b2b2b"></div>
<svg class="abs" style="left:989px;top:878.6px" width="16.0" height="15.4" viewBox="0 0 16 15.4"><defs><linearGradient id="ow" x1="0" y1="0" x2="1" y2="1"><stop offset="0" stop-color="#ffffff"/><stop offset="1" stop-color="#b8b8b8"/></linearGradient></defs><path fill-rule="evenodd" d="M8 0.3 C12.6 0.3 15.7 3.6 15.7 7.7 C15.7 11.8 12.6 15.1 8 15.1 C3.4 15.1 0.3 11.8 0.3 7.7 C0.3 3.6 3.4 0.3 8 0.3Z M8.3 2.4 C6 2.4 4.6 4.8 4.6 7.7 C4.6 10.6 6 13 8.3 13 C10.6 13 11.8 10.6 11.8 7.7 C11.8 4.8 10.6 2.4 8.3 2.4Z" fill="url(#ow)"/></svg>
<div class="abs" style="left:1013.8px;font-size:18.5px;letter-spacing:-0.394px;top:876.4px;line-height:21px;color:#fff;white-space:pre">LHV ...</div>
<svg class="abs" style="left:1081.6px;top:881.2px" width="16" height="9.6" viewBox="0 0 16 9.6"><rect x="0.3" y="0.3" width="15.4" height="9" rx="0.8" fill="#2f6e46" stroke="#5d9670" stroke-width="0.6"/><path d="M4 2.4 L10 6.2" stroke="#9cc6a8" stroke-width="0.7"/><rect x="0.6" y="0.6" width="14.8" height="1.4" fill="#6aa07a"/></svg>
<div class="abs" style="left:1107.6px;font-size:18.5px;letter-spacing:-0.358px;top:876.4px;line-height:21px;color:#fff;white-space:pre">[Scre...</div>
<svg class="abs" style="left:1175px;top:882px" width="15.4" height="8.4" viewBox="0 0 15.4 8.4"><rect x="0.2" y="0.2" width="15" height="8" rx="0.8" fill="#8fbf9c"/><rect x="7" y="4.2" width="7.4" height="3" fill="#1d4a2c"/><rect x="0.2" y="0.2" width="15" height="1.6" fill="#b6d8be"/></svg>
<div class="abs" style="left:1199.6px;font-size:18.5px;letter-spacing:-0.173px;top:876.4px;line-height:21px;color:#fff;white-space:pre">[Scre...</div>
<svg class="abs" style="left:1268.6px;top:879.4px" width="15" height="13.4" viewBox="0 0 15 13.4"><rect x="0.3" y="0.3" width="14.2" height="12.6" rx="1.4" fill="#2c4a36" stroke="#24402e" stroke-width="0.6"/><path d="M2.6 3 L5 4.3 L2.6 5.6" fill="none" stroke="#a9c4b0" stroke-width="0.8"/><rect x="5.6" y="6" width="3.2" height="0.8" fill="#a9c4b0"/></svg>
<div class="abs" style="left:1293px;font-size:18.5px;letter-spacing:0.287px;top:876.4px;line-height:21px;color:#fff;white-space:pre">[ma...</div>
<div class="abs" style="left:1406px;top:872px;width:150px;height:28px;background:#0a4022;border-top:1px solid #063418"></div>
<div class="abs" style="left:1456.5px;top:873px;width:1px;height:26px;background:#156d35"></div><div class="abs" style="left:1506.8px;top:873px;width:1px;height:26px;background:#156d35"></div>
<div class="abs" style="left:1357px;top:873px;width:49.4px;height:25.8px;background:#6fa5a3;border:1px solid #e8f0f0"></div>
<svg class="abs" style="left:1373.2px;top:878.6px" width="16.0" height="15.4" viewBox="0 0 16 15.4"><defs><linearGradient id="ow" x1="0" y1="0" x2="1" y2="1"><stop offset="0" stop-color="#ffffff"/><stop offset="1" stop-color="#b8b8b8"/></linearGradient></defs><path fill-rule="evenodd" d="M8 0.3 C12.6 0.3 15.7 3.6 15.7 7.7 C15.7 11.8 12.6 15.1 8 15.1 C3.4 15.1 0.3 11.8 0.3 7.7 C0.3 3.6 3.4 0.3 8 0.3Z M8.3 2.4 C6 2.4 4.6 4.8 4.6 7.7 C4.6 10.6 6 13 8.3 13 C10.6 13 11.8 10.6 11.8 7.7 C11.8 4.8 10.6 2.4 8.3 2.4Z" fill="url(#ow)"/></svg>
<svg class="abs" style="left:1558.5px;top:874.5px" width="19" height="23" viewBox="0 0 19 23"><rect x="1" y="3.6" width="17" height="18.6" rx="2" fill="#d6d6d6"/><rect x="1" y="0.8" width="17" height="4" rx="1.4" fill="#efefef"/><rect x="4" y="1.8" width="11" height="1.2" fill="#fff"/><g fill="none" stroke="#3f9a4a" stroke-width="1.5"><path d="M7 11 L9.5 8 L12 11"/><path d="M13 12.6 L13.6 16 L10.4 16.4"/><path d="M8.4 16.6 L5.4 16 L6.2 12.8"/></g></svg>
<div class="abs" style="left:1580.5px;top:872.5px;width:19.5px;height:27.5px;background:#3b3b3b;border-radius:4px;border:1px solid #1c1c1c"></div>
<svg class="abs" style="left:1580px;top:872px" width="20" height="28" viewBox="0 0 20 28"><path d="M8.5 9 L13 14 L8.5 19" fill="none" stroke="#d8d8d8" stroke-width="1.3"/></svg>
</div></div>
</body>
</html>
